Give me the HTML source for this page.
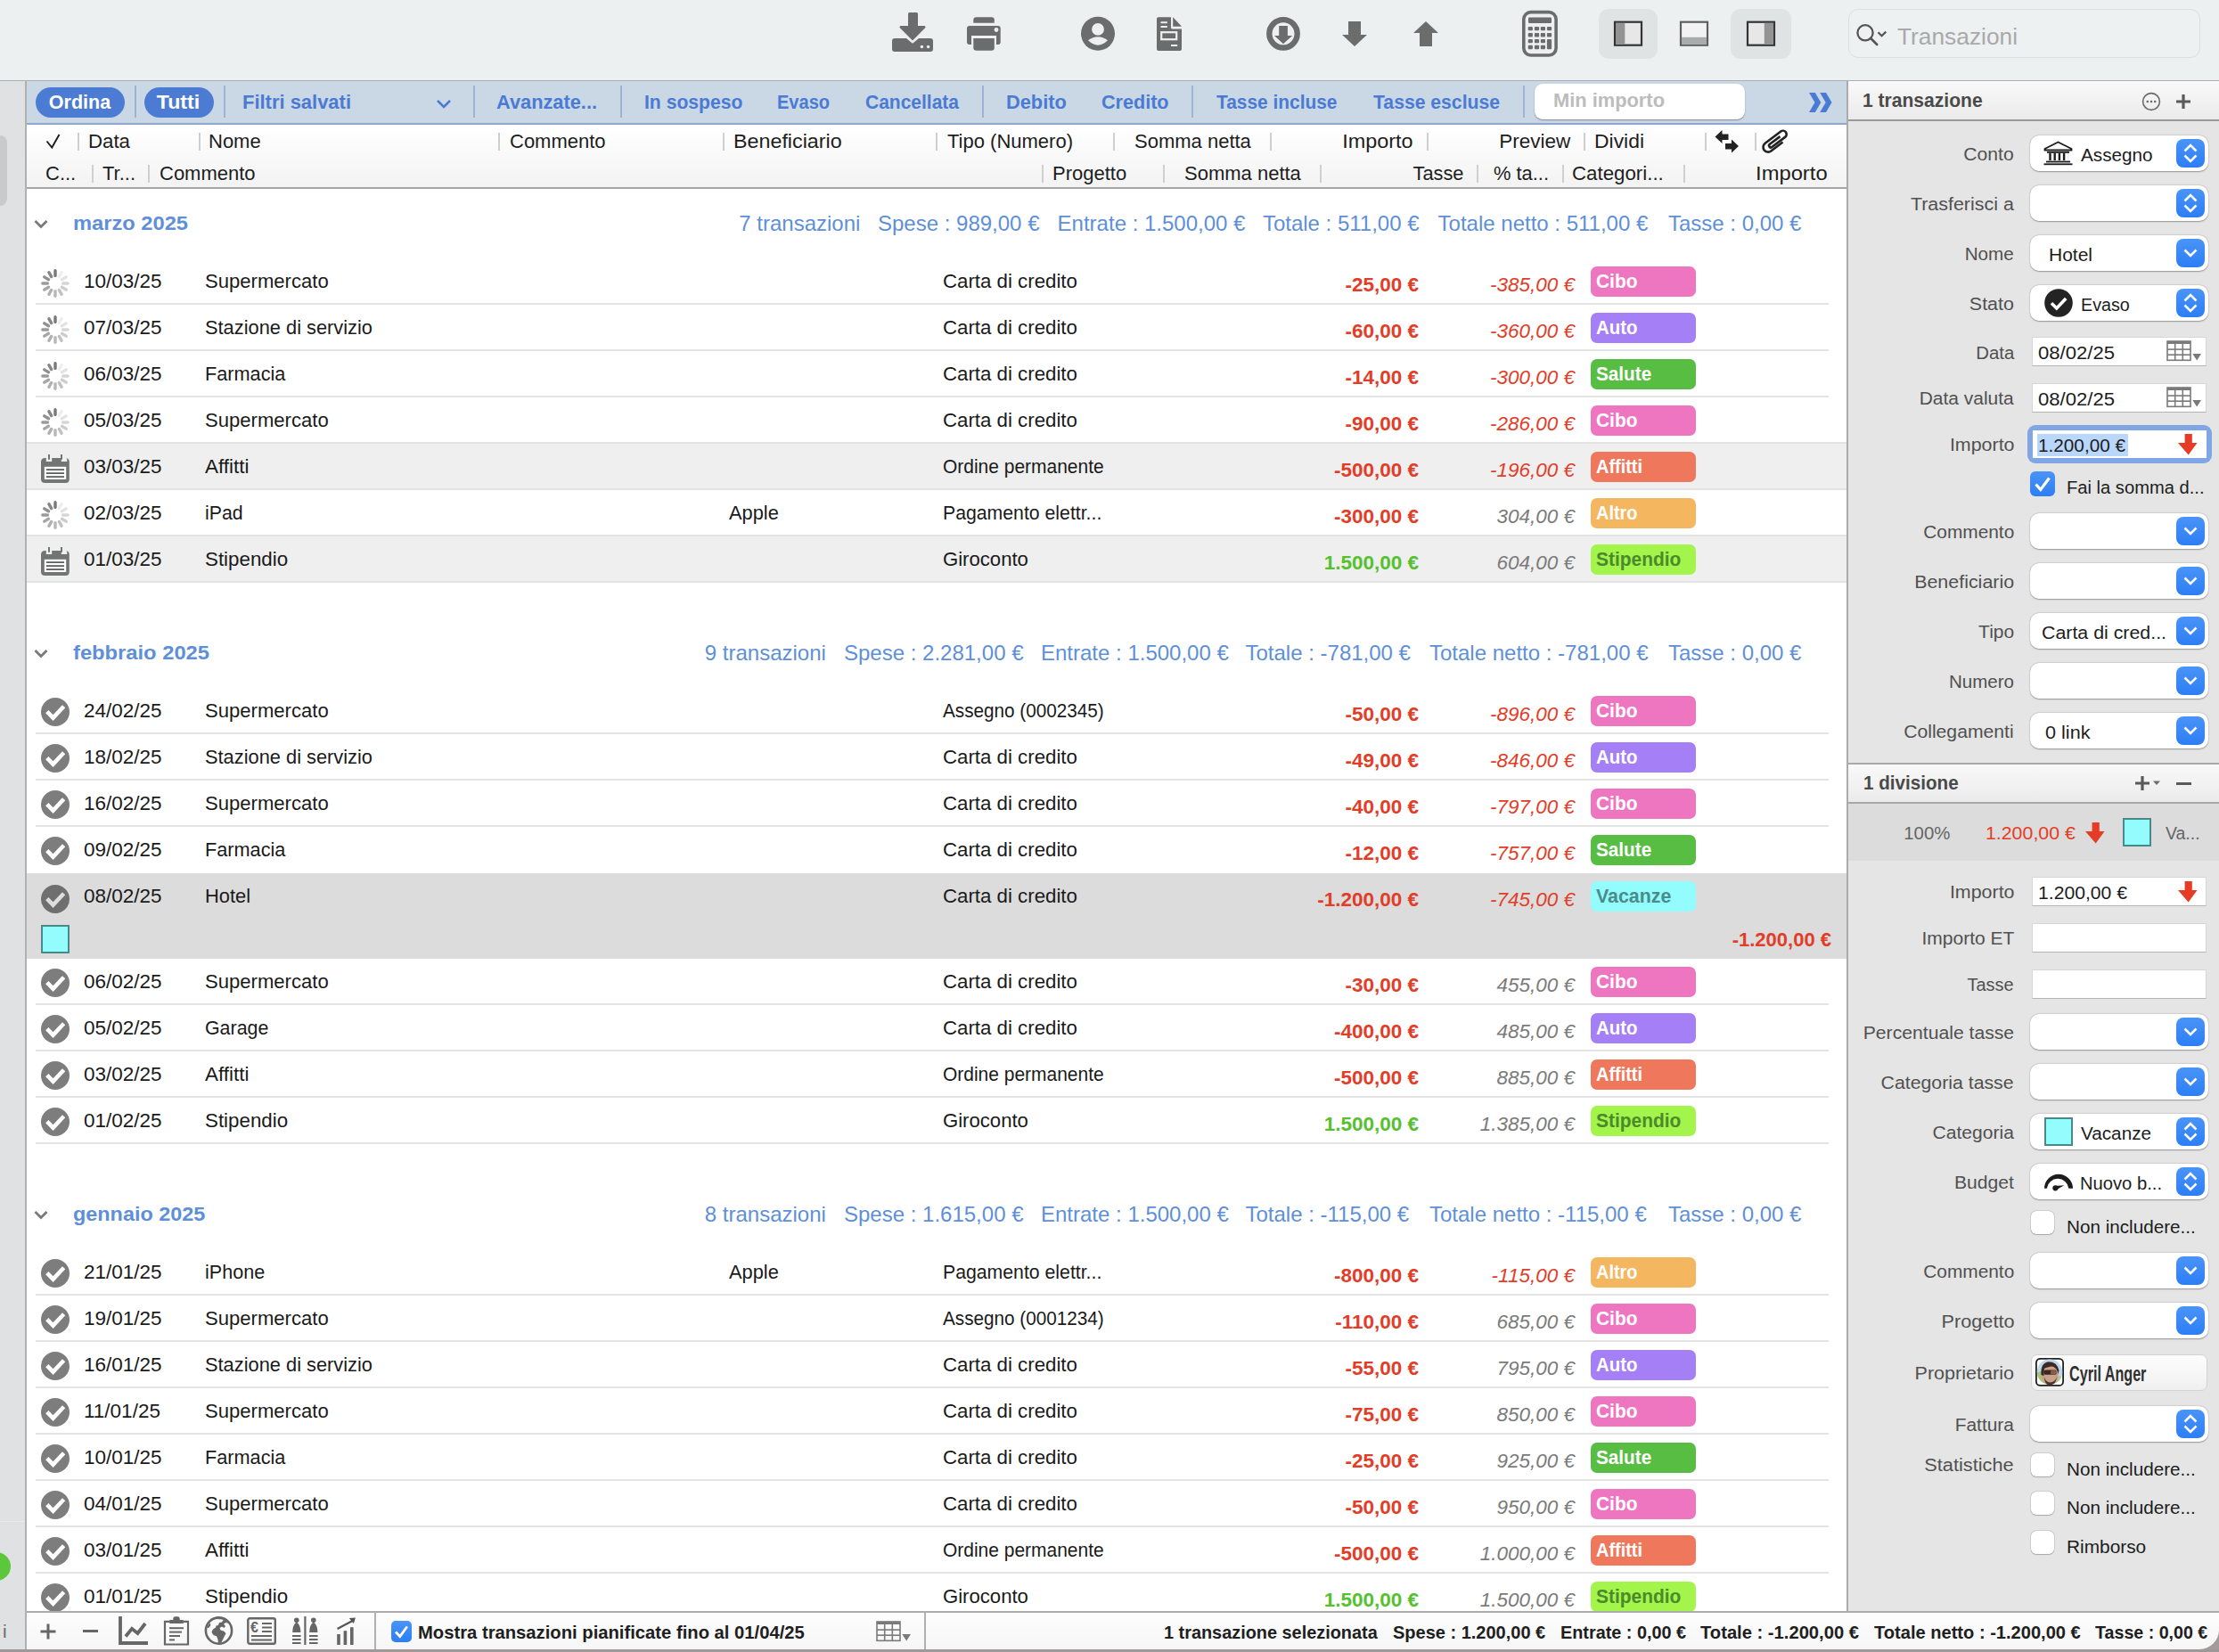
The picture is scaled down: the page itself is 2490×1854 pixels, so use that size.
<!DOCTYPE html>
<html><head><meta charset="utf-8"><title>Transazioni</title>
<style>
html,body{margin:0;padding:0;}
body{width:2490px;height:1854px;overflow:hidden;position:relative;background:#edf0f1;font-family:"Liberation Sans", sans-serif;}
.t{position:absolute;white-space:nowrap;}
svg{overflow:visible}
</style></head><body>

<div style="position:absolute;left:0px;top:0px;width:2490px;height:90px;background:#edf0f1;"></div>
<div style="position:absolute;left:0px;top:90px;width:2490px;height:1px;background:#a9aeb2;"></div>
<svg style="position:absolute;left:1000px;top:14px" width="48" height="46" viewBox="0 0 48 46">
<path fill="#6b6d6d" d="M19 1.5 Q19 0 20.5 0 L28.5 0 Q30 0 30 1.5 L30 15 L37 15 Q39.5 15.5 38 17.5 L24 31.5 L10 17.5 Q8.5 15.5 11 15 L19 15 Z"/>
<path fill="#6b6d6d" d="M4 29 L17 29 L24 34.8 L31 29 L44 29 Q47 29 47 32 L47 41 Q47 44 44 44 L4 44 Q1 44 1 41 L1 32 Q1 29 4 29 Z"/>
<circle cx="34.4" cy="38.5" r="1.7" fill="#edf0f1"/><circle cx="41.6" cy="38.5" r="1.7" fill="#edf0f1"/>
</svg>
<svg style="position:absolute;left:1084px;top:18px" width="40" height="40" viewBox="0 0 40 40">
<path fill="#6b6d6d" d="M8.3 4.5 Q8.3 1.2 11.5 1.2 L28.7 1.2 Q31.8 1.2 31.8 4.5 L31.8 7.8 L8.3 7.8 Z"/>
<path fill="#6b6d6d" d="M4 11 L36 11 Q38.7 11 38.7 14 L38.7 29 Q38.7 32 36 32 L34 32 L34 22 L6 22 L6 32 L4 32 Q1 32 1 29 L1 14 Q1 11 4 11 Z"/>
<circle cx="34" cy="15.5" r="2.4" fill="#edf0f1"/>
<path fill="#6b6d6d" d="M8.3 25 L31.8 25 L31.8 35.5 Q31.8 38.7 28.7 38.7 L11.5 38.7 Q8.3 38.7 8.3 35.5 Z"/>
</svg>
<svg style="position:absolute;left:1212px;top:18px" width="40" height="40" viewBox="0 0 40 40">
<circle cx="20" cy="19.8" r="19" fill="#6b6d6d"/>
<circle cx="20" cy="14.9" r="6.9" fill="#edf0f1"/>
<path fill="#edf0f1" d="M9 27.3 Q20 19 31 27.3 Q20 38 9 27.3 Z"/>
</svg>
<svg style="position:absolute;left:1297px;top:18px" width="32" height="40" viewBox="0 0 32 40">
<path fill="#6b6d6d" d="M1 3 Q1 1.2 3 1.2 L17 1.2 L17 13 Q17 14.5 18.5 14.5 L29 14.5 L29 37 Q29 39 27 39 L3 39 Q1 39 1 37 Z"/>
<path fill="#6b6d6d" d="M19.2 1.2 L29 11.8 L19.2 11.8 Z"/>
<rect x="5.5" y="6.2" width="7.3" height="2" fill="#edf0f1"/>
<rect x="5.5" y="11" width="7.3" height="2" fill="#edf0f1"/>
<rect x="6.2" y="18.2" width="17" height="8" fill="none" stroke="#edf0f1" stroke-width="2.2"/>
<rect x="17" y="32" width="7.2" height="2" fill="#edf0f1"/>
</svg>
<svg style="position:absolute;left:1420px;top:18px" width="40" height="40" viewBox="0 0 40 40">
<circle cx="20" cy="19.8" r="15.7" fill="none" stroke="#6b6d6d" stroke-width="6.4"/>
<path fill="#6b6d6d" d="M15.2 11 L24.9 11 L24.9 22 L30.2 22 L20 31.2 L10 22 L15.2 22 Z"/>
</svg>
<svg style="position:absolute;left:1505px;top:23px" width="30" height="30" viewBox="0 0 30 30"><path fill="#6b6d6d" d="M8 1 L22 1 L22 16 L29 16 L15 29 L1 16 L8 16 Z"/></svg>
<svg style="position:absolute;left:1585px;top:23px" width="30" height="30" viewBox="0 0 30 30"><path fill="#6b6d6d" d="M15 1 L29 14 L22 14 L22 29 L8 29 L8 14 L1 14 Z"/></svg>
<svg style="position:absolute;left:1706px;top:10px" width="44" height="56" viewBox="0 0 44 56">
<rect x="3.8" y="3.6" width="36.3" height="48.4" rx="8" fill="none" stroke="#6b6d6d" stroke-width="3.6"/>
<rect x="9" y="9.4" width="26" height="6.5" rx="1.2" fill="#6b6d6d"/>
<rect x="8.700000000000001" y="19.900000000000002" width="5.2" height="4.4" rx="1" fill="#6b6d6d"/><rect x="8.700000000000001" y="27.0" width="5.2" height="4.4" rx="1" fill="#6b6d6d"/><rect x="8.700000000000001" y="33.9" width="5.2" height="4.4" rx="1" fill="#6b6d6d"/><rect x="8.700000000000001" y="40.8" width="5.2" height="4.4" rx="1" fill="#6b6d6d"/><rect x="15.9" y="19.900000000000002" width="5.2" height="4.4" rx="1" fill="#6b6d6d"/><rect x="15.9" y="27.0" width="5.2" height="4.4" rx="1" fill="#6b6d6d"/><rect x="15.9" y="33.9" width="5.2" height="4.4" rx="1" fill="#6b6d6d"/><rect x="15.9" y="40.8" width="5.2" height="4.4" rx="1" fill="#6b6d6d"/><rect x="22.799999999999997" y="19.900000000000002" width="5.2" height="4.4" rx="1" fill="#6b6d6d"/><rect x="22.799999999999997" y="27.0" width="5.2" height="4.4" rx="1" fill="#6b6d6d"/><rect x="22.799999999999997" y="33.9" width="5.2" height="4.4" rx="1" fill="#6b6d6d"/><rect x="22.799999999999997" y="40.8" width="5.2" height="4.4" rx="1" fill="#6b6d6d"/><rect x="29.9" y="19.900000000000002" width="5.2" height="4.4" rx="1" fill="#6b6d6d"/><rect x="29.9" y="27.0" width="5.2" height="4.4" rx="1" fill="#6b6d6d"/><rect x="29.9" y="33.9" width="5.2" height="11.3" rx="1" fill="#6b6d6d"/></svg>
<div style="position:absolute;left:1794px;top:10px;width:66px;height:56px;background:#e0e3e4;border-radius:11px;"></div>
<div style="position:absolute;left:1942px;top:10px;width:68px;height:56px;background:#e0e3e4;border-radius:11px;"></div>
<svg style="position:absolute;left:1810px;top:23px" width="34" height="30" viewBox="0 0 34 30">
<rect x="2" y="1.7" width="30" height="26" fill="#e7e7e7" stroke="#333" stroke-width="2.2"/>
<rect x="3" y="2.8" width="10.3" height="23.8" fill="#939393"/>
</svg>
<svg style="position:absolute;left:1884px;top:23px" width="34" height="30" viewBox="0 0 34 30">
<rect x="2" y="1.7" width="30" height="26" fill="#f2f2f2" stroke="#5e6060" stroke-width="2.2"/>
<rect x="3" y="18.8" width="28" height="7.8" fill="#a9acac"/>
</svg>
<svg style="position:absolute;left:1959px;top:23px" width="34" height="30" viewBox="0 0 34 30">
<rect x="2" y="1.7" width="30" height="26" fill="#e7e7e7" stroke="#333" stroke-width="2.2"/>
<rect x="20.8" y="2.8" width="10.3" height="23.8" fill="#939393"/>
</svg>
<div style="position:absolute;left:2074px;top:10px;width:395px;height:55px;box-sizing:border-box;border:1.5px solid #dcdfe0;border-radius:11px;background:#eef1f2;"></div>
<svg style="position:absolute;left:2080px;top:24px" width="42" height="30" viewBox="0 0 42 30">
<circle cx="13" cy="12.8" r="8.6" fill="none" stroke="#555" stroke-width="2.3"/>
<line x1="19.2" y1="19" x2="26.2" y2="26" stroke="#555" stroke-width="2.6" stroke-linecap="round"/>
<path d="M27.5 12.2 L31.5 16.2 L36.3 11.6" fill="none" stroke="#555" stroke-width="2.2"/>
</svg>
<div class="t" style="left:2129.4px;top:23.5px;font-size:26px;line-height:34px;color:#a9a9a9;font-weight:normal;font-style:normal;"><span id="fit1" style="display:inline-block;transform:scaleX(1.0117);transform-origin:left center;">Transazioni</span></div>
<div style="position:absolute;left:0px;top:91px;width:28px;height:1717px;background:#dfe1e2;"></div>
<div style="position:absolute;left:0px;top:152px;width:8px;height:79px;background:#c9cacc;border-radius:0 8px 8px 0;"></div>
<div style="position:absolute;left:0px;top:1707px;width:28px;height:1px;background:#e8eaeb;"></div>
<div style="position:absolute;left:-20px;top:1742px;width:32px;height:32px;border-radius:50%;background:#5ac83a;"></div>
<div style="position:absolute;left:28px;top:91px;width:2px;height:1717px;background:#b0b0b0;"></div>
<div style="position:absolute;left:30px;top:91px;width:2042px;height:47px;background:#cad7e5;"></div>
<div style="position:absolute;left:30px;top:138px;width:2042px;height:2px;background:#8ea7cc;"></div>
<div style="position:absolute;left:40px;top:98px;width:100px;height:34px;border-radius:17px;background:#4c7bd3;"></div>
<div style="position:absolute;left:162px;top:98px;width:78px;height:34px;border-radius:17px;background:#4c7bd3;"></div>
<div class="t" style="left:-310.7px;width:800px;text-align:center;top:99.5px;font-size:22px;line-height:30px;color:#fff;font-weight:bold;font-style:normal;"><span id="fit2" style="display:inline-block;transform:scaleX(0.9788);transform-origin:center center;">Ordina</span></div>
<div class="t" style="left:-199.9px;width:800px;text-align:center;top:99.5px;font-size:22px;line-height:30px;color:#fff;font-weight:bold;font-style:normal;"><span id="fit3" style="display:inline-block;transform:scaleX(1.0518);transform-origin:center center;">Tutti</span></div>
<div style="position:absolute;left:151px;top:96px;width:2px;height:36px;background:#9db3d3;"></div>
<div style="position:absolute;left:251px;top:96px;width:2px;height:36px;background:#9db3d3;"></div>
<div style="position:absolute;left:531px;top:96px;width:2px;height:36px;background:#9db3d3;"></div>
<div style="position:absolute;left:696px;top:96px;width:2px;height:36px;background:#9db3d3;"></div>
<div style="position:absolute;left:1102px;top:96px;width:2px;height:36px;background:#9db3d3;"></div>
<div style="position:absolute;left:1337px;top:96px;width:2px;height:36px;background:#9db3d3;"></div>
<div style="position:absolute;left:1709px;top:96px;width:2px;height:36px;background:#9db3d3;"></div>
<div class="t" style="left:272px;top:99.5px;font-size:22px;line-height:30px;color:#4a7bd4;font-weight:bold;font-style:normal;"><span id="fit4" style="display:inline-block;transform:scaleX(0.9977);transform-origin:left center;">Filtri salvati</span></div>
<svg style="position:absolute;left:489px;top:110px" width="18" height="14" viewBox="0 0 18 14"><path d="M2 3 L9 10 L16 3" fill="none" stroke="#4a7bd4" stroke-width="2.6"/></svg>
<div class="t" style="left:557px;top:99.5px;font-size:22px;line-height:30px;color:#4a7bd4;font-weight:bold;font-style:normal;"><span id="fit5" style="display:inline-block;transform:scaleX(0.9901);transform-origin:left center;">Avanzate...</span></div>
<div class="t" style="left:722.6px;top:99.5px;font-size:22px;line-height:30px;color:#4a7bd4;font-weight:bold;font-style:normal;"><span id="fit6" style="display:inline-block;transform:scaleX(0.9607);transform-origin:left center;">In sospeso</span></div>
<div class="t" style="left:872px;top:99.5px;font-size:22px;line-height:30px;color:#4a7bd4;font-weight:bold;font-style:normal;"><span id="fit7" style="display:inline-block;transform:scaleX(0.9101);transform-origin:left center;">Evaso</span></div>
<div class="t" style="left:971px;top:99.5px;font-size:22px;line-height:30px;color:#4a7bd4;font-weight:bold;font-style:normal;"><span id="fit8" style="display:inline-block;transform:scaleX(0.9540);transform-origin:left center;">Cancellata</span></div>
<div class="t" style="left:1128.6px;top:99.5px;font-size:22px;line-height:30px;color:#4a7bd4;font-weight:bold;font-style:normal;"><span id="fit9" style="display:inline-block;transform:scaleX(0.9905);transform-origin:left center;">Debito</span></div>
<div class="t" style="left:1236px;top:99.5px;font-size:22px;line-height:30px;color:#4a7bd4;font-weight:bold;font-style:normal;"><span id="fit10" style="display:inline-block;transform:scaleX(0.9805);transform-origin:left center;">Credito</span></div>
<div class="t" style="left:1365px;top:99.5px;font-size:22px;line-height:30px;color:#4a7bd4;font-weight:bold;font-style:normal;"><span id="fit11" style="display:inline-block;transform:scaleX(0.9497);transform-origin:left center;">Tasse incluse</span></div>
<div class="t" style="left:1541px;top:99.5px;font-size:22px;line-height:30px;color:#4a7bd4;font-weight:bold;font-style:normal;"><span id="fit12" style="display:inline-block;transform:scaleX(0.9621);transform-origin:left center;">Tasse escluse</span></div>
<div style="position:absolute;left:1722px;top:94px;width:236px;height:40px;border-radius:9px;background:#fff;box-shadow:0 1px 1.5px rgba(0,0,0,0.35);"></div>
<div class="t" style="left:1743px;top:98.0px;font-size:22px;line-height:30px;color:#bcbcbc;font-weight:bold;font-style:normal;"><span id="fit13" style="display:inline-block;transform:scaleX(0.9930);transform-origin:left center;">Min importo</span></div>
<svg style="position:absolute;left:2030px;top:104px" width="28" height="23" viewBox="0 0 28 23"><path d="M0 0 L6.8 0 L13.3 11 L6.8 22 L0 22 L6.5 11 Z M12.2 0 L19 0 L25.5 11 L19 22 L12.2 22 L18.7 11 Z" fill="#4a7bd4"/></svg>
<div style="position:absolute;left:30px;top:140px;width:2042px;height:70px;background:linear-gradient(#ffffff,#f3f3f3);"></div>
<div style="position:absolute;left:30px;top:210px;width:2042px;height:2px;background:#a6a6a6;"></div>
<svg style="position:absolute;left:50px;top:149px" width="20" height="20" viewBox="0 0 20 20"><path d="M2.5 9.5 L8.3 16.5 L16.5 2" fill="none" stroke="#1d1d1d" stroke-width="1.9"/></svg>
<div style="position:absolute;left:87px;top:148.8px;width:2px;height:20px;background:#cfcfcf;"></div>
<div style="position:absolute;left:223px;top:148.8px;width:2px;height:20px;background:#cfcfcf;"></div>
<div style="position:absolute;left:559px;top:148.8px;width:2px;height:20px;background:#cfcfcf;"></div>
<div style="position:absolute;left:811px;top:148.8px;width:2px;height:20px;background:#cfcfcf;"></div>
<div style="position:absolute;left:1050px;top:148.8px;width:2px;height:20px;background:#cfcfcf;"></div>
<div style="position:absolute;left:1249px;top:148.8px;width:2px;height:20px;background:#cfcfcf;"></div>
<div style="position:absolute;left:1425px;top:148.8px;width:2px;height:20px;background:#cfcfcf;"></div>
<div style="position:absolute;left:1601px;top:148.8px;width:2px;height:20px;background:#cfcfcf;"></div>
<div style="position:absolute;left:1777px;top:148.8px;width:2px;height:20px;background:#cfcfcf;"></div>
<div style="position:absolute;left:1913px;top:148.8px;width:2px;height:20px;background:#cfcfcf;"></div>
<div style="position:absolute;left:1969px;top:148.8px;width:2px;height:20px;background:#cfcfcf;"></div>
<div style="position:absolute;left:103px;top:184.5px;width:2px;height:20px;background:#cfcfcf;"></div>
<div style="position:absolute;left:166px;top:184.5px;width:2px;height:20px;background:#cfcfcf;"></div>
<div style="position:absolute;left:1169px;top:184.5px;width:2px;height:20px;background:#cfcfcf;"></div>
<div style="position:absolute;left:1305px;top:184.5px;width:2px;height:20px;background:#cfcfcf;"></div>
<div style="position:absolute;left:1481px;top:184.5px;width:2px;height:20px;background:#cfcfcf;"></div>
<div style="position:absolute;left:1657px;top:184.5px;width:2px;height:20px;background:#cfcfcf;"></div>
<div style="position:absolute;left:1753px;top:184.5px;width:2px;height:20px;background:#cfcfcf;"></div>
<div style="position:absolute;left:1889px;top:184.5px;width:2px;height:20px;background:#cfcfcf;"></div>
<div class="t" style="left:99px;top:143.8px;font-size:22px;line-height:30px;color:#1d1d1d;font-weight:normal;font-style:normal;"><span id="fit14" style="display:inline-block;transform:scaleX(1.0111);transform-origin:left center;">Data</span></div>
<div class="t" style="left:234px;top:143.8px;font-size:22px;line-height:30px;color:#1d1d1d;font-weight:normal;font-style:normal;">Nome</div>
<div class="t" style="left:572px;top:143.8px;font-size:22px;line-height:30px;color:#1d1d1d;font-weight:normal;font-style:normal;">Commento</div>
<div class="t" style="left:822.6px;top:143.8px;font-size:22px;line-height:30px;color:#1d1d1d;font-weight:normal;font-style:normal;"><span id="fit15" style="display:inline-block;transform:scaleX(1.0587);transform-origin:left center;">Beneficiario</span></div>
<div class="t" style="left:1063px;top:143.8px;font-size:22px;line-height:30px;color:#1d1d1d;font-weight:normal;font-style:normal;">Tipo (Numero)</div>
<div class="t" style="left:1273px;top:143.8px;font-size:22px;line-height:30px;color:#1d1d1d;font-weight:normal;font-style:normal;">Somma netta</div>
<div class="t" style="left:786px;width:800px;text-align:right;top:143.8px;font-size:22px;line-height:30px;color:#1d1d1d;font-weight:normal;font-style:normal;"><span id="fit16" style="display:inline-block;transform:scaleX(1.0631);transform-origin:right center;">Importo</span></div>
<div class="t" style="left:962px;width:800px;text-align:right;top:143.8px;font-size:22px;line-height:30px;color:#1d1d1d;font-weight:normal;font-style:normal;"><span id="fit17" style="display:inline-block;transform:scaleX(1.0224);transform-origin:right center;">Preview</span></div>
<div class="t" style="left:1789px;top:143.8px;font-size:22px;line-height:30px;color:#1d1d1d;font-weight:normal;font-style:normal;"><span id="fit18" style="display:inline-block;transform:scaleX(1.0410);transform-origin:left center;">Dividi</span></div>
<svg style="position:absolute;left:1924px;top:146px" width="28" height="26" viewBox="0 0 28 26"><path fill="#222" d="M0.5 7.5 L8.5 0 L8.5 4.5 L15.5 4.5 L15.5 11 L8.5 11 L8.5 15 Z M27 18 L19 10.5 L19 15 L12 15 L12 21.5 L19 21.5 L19 25.5 Z"/></svg>
<svg style="position:absolute;left:1975px;top:140px" width="36" height="36" viewBox="0 0 36 36"><g transform="translate(17.8,18.5) rotate(-37) translate(-16.5,0)"><path d="M22 5.5 L5.5 5.5 A5.5 5.5 0 0 1 5.5 -5.5 L27.5 -5.5 A4 4 0 0 1 27.5 2.5 L9 2.5 A2 2 0 0 1 9 -1.5 L23.5 -1.5" fill="none" stroke="#222" stroke-width="2.6"/></g></svg>
<div class="t" style="left:51px;top:179.5px;font-size:22px;line-height:30px;color:#1d1d1d;font-weight:normal;font-style:normal;">C...</div>
<div class="t" style="left:115px;top:179.5px;font-size:22px;line-height:30px;color:#1d1d1d;font-weight:normal;font-style:normal;">Tr...</div>
<div class="t" style="left:179px;top:179.5px;font-size:22px;line-height:30px;color:#1d1d1d;font-weight:normal;font-style:normal;">Commento</div>
<div class="t" style="left:1181px;top:179.5px;font-size:22px;line-height:30px;color:#1d1d1d;font-weight:normal;font-style:normal;">Progetto</div>
<div class="t" style="left:1329px;top:179.5px;font-size:22px;line-height:30px;color:#1d1d1d;font-weight:normal;font-style:normal;">Somma netta</div>
<div class="t" style="left:842px;width:800px;text-align:right;top:179.5px;font-size:22px;line-height:30px;color:#1d1d1d;font-weight:normal;font-style:normal;"><span id="fit19" style="display:inline-block;transform:scaleX(0.9916);transform-origin:right center;">Tasse</span></div>
<div class="t" style="left:1676px;top:179.5px;font-size:22px;line-height:30px;color:#1d1d1d;font-weight:normal;font-style:normal;"><span id="fit20" style="display:inline-block;transform:scaleX(0.9942);transform-origin:left center;">% ta...</span></div>
<div class="t" style="left:1764px;top:179.5px;font-size:22px;line-height:30px;color:#1d1d1d;font-weight:normal;font-style:normal;"><span id="fit21" style="display:inline-block;transform:scaleX(1.0128);transform-origin:left center;">Categori...</span></div>
<div class="t" style="left:1250.5px;width:800px;text-align:right;top:179.5px;font-size:22px;line-height:30px;color:#1d1d1d;font-weight:normal;font-style:normal;"><span id="fit22" style="display:inline-block;transform:scaleX(1.0792);transform-origin:right center;">Importo</span></div>
<div style="position:absolute;left:30px;top:212px;width:2042px;height:1596px;background:#ffffff;"></div>
<svg style="position:absolute;left:37px;top:245px" width="20" height="14" viewBox="0 0 20 14"><path d="M2.5 3 L9 9.5 L15.5 3" fill="none" stroke="#7a7a7a" stroke-width="2.8"/></svg>
<div class="t" style="left:82px;top:236.3px;font-size:22.5px;line-height:30px;color:#5e8fd8;font-weight:bold;font-style:normal;"><span id="fit23" style="display:inline-block;transform:scaleX(1.0524);transform-origin:left center;">marzo 2025</span></div>
<div class="t" style="left:829.3px;top:236.0px;font-size:24px;line-height:30px;color:#5e8fd8;font-weight:normal;font-style:normal;">7 transazioni</div>
<div class="t" style="left:985px;top:236.0px;font-size:24px;line-height:30px;color:#5e8fd8;font-weight:normal;font-style:normal;">Spese : 989,00 &euro;</div>
<div class="t" style="left:1186.6px;top:236.0px;font-size:24px;line-height:30px;color:#5e8fd8;font-weight:normal;font-style:normal;">Entrate : 1.500,00 &euro;</div>
<div class="t" style="left:1416.9px;top:236.0px;font-size:24px;line-height:30px;color:#5e8fd8;font-weight:normal;font-style:normal;">Totale : 511,00 &euro;</div>
<div class="t" style="left:1613.6px;top:236.0px;font-size:24px;line-height:30px;color:#5e8fd8;font-weight:normal;font-style:normal;">Totale netto : 511,00 &euro;</div>
<div class="t" style="left:1872px;top:236.0px;font-size:24px;line-height:30px;color:#5e8fd8;font-weight:normal;font-style:normal;">Tasse : 0,00 &euro;</div>
<div style="position:absolute;left:40px;top:340px;width:2012px;height:2px;background:#e3e3e3;"></div>
<svg style="position:absolute;left:0px;top:0px" width="1" height="1" viewBox="0 0 1 1"><line x1="62.00" y1="309.40" x2="62.00" y2="303.80" stroke="#787878" stroke-width="3.4" stroke-linecap="round"/><line x1="66.30" y1="310.55" x2="69.10" y2="305.70" stroke="#eeeeee" stroke-width="3.4" stroke-linecap="round"/><line x1="69.45" y1="313.70" x2="74.30" y2="310.90" stroke="#e2e2e2" stroke-width="3.4" stroke-linecap="round"/><line x1="70.60" y1="318.00" x2="76.20" y2="318.00" stroke="#d6d6d6" stroke-width="3.4" stroke-linecap="round"/><line x1="69.45" y1="322.30" x2="74.30" y2="325.10" stroke="#cccccc" stroke-width="3.4" stroke-linecap="round"/><line x1="66.30" y1="325.45" x2="69.10" y2="330.30" stroke="#c2c2c2" stroke-width="3.4" stroke-linecap="round"/><line x1="62.00" y1="326.60" x2="62.00" y2="332.20" stroke="#b8b8b8" stroke-width="3.4" stroke-linecap="round"/><line x1="57.70" y1="325.45" x2="54.90" y2="330.30" stroke="#b0b0b0" stroke-width="3.4" stroke-linecap="round"/><line x1="54.55" y1="322.30" x2="49.70" y2="325.10" stroke="#a6a6a6" stroke-width="3.4" stroke-linecap="round"/><line x1="53.40" y1="318.00" x2="47.80" y2="318.00" stroke="#9a9a9a" stroke-width="3.4" stroke-linecap="round"/><line x1="54.55" y1="313.70" x2="49.70" y2="310.90" stroke="#909090" stroke-width="3.4" stroke-linecap="round"/><line x1="57.70" y1="310.55" x2="54.90" y2="305.70" stroke="#868686" stroke-width="3.4" stroke-linecap="round"/></svg>
<div class="t" style="left:94px;top:301.2px;font-size:22.5px;line-height:30px;color:#1a1a1a;font-weight:normal;font-style:normal;">10/03/25</div>
<div class="t" style="left:230px;top:301.2px;font-size:22.5px;line-height:30px;color:#1a1a1a;font-weight:normal;font-style:normal;"><span id="fit24" style="display:inline-block;transform:scaleX(0.9814);transform-origin:left center;">Supermercato</span></div>
<div class="t" style="left:1058px;top:301.2px;font-size:22.5px;line-height:30px;color:#1a1a1a;font-weight:normal;font-style:normal;"><span id="fit25" style="display:inline-block;transform:scaleX(0.9890);transform-origin:left center;">Carta di credito</span></div>
<div class="t" style="left:792px;width:800px;text-align:right;top:305.2px;font-size:22.5px;line-height:30px;color:#e23d28;font-weight:bold;font-style:normal;">-25,00 &euro;</div>
<div class="t" style="left:967px;width:800px;text-align:right;top:305.2px;font-size:22.5px;line-height:30px;color:#e23d28;font-weight:normal;font-style:italic;">-385,00 &euro;</div>
<div style="position:absolute;left:1785px;top:299px;width:118px;height:34px;border-radius:7px;background:#ee76c0;"></div>
<div class="t" style="left:1790.5px;top:301.0px;font-size:22px;line-height:30px;color:#ffffff;font-weight:bold;font-style:normal;"><span id="fit26" style="display:inline-block;transform:scaleX(0.9511);transform-origin:left center;">Cibo</span></div>
<div style="position:absolute;left:40px;top:392px;width:2012px;height:2px;background:#e3e3e3;"></div>
<svg style="position:absolute;left:0px;top:0px" width="1" height="1" viewBox="0 0 1 1"><line x1="62.00" y1="361.40" x2="62.00" y2="355.80" stroke="#787878" stroke-width="3.4" stroke-linecap="round"/><line x1="66.30" y1="362.55" x2="69.10" y2="357.70" stroke="#eeeeee" stroke-width="3.4" stroke-linecap="round"/><line x1="69.45" y1="365.70" x2="74.30" y2="362.90" stroke="#e2e2e2" stroke-width="3.4" stroke-linecap="round"/><line x1="70.60" y1="370.00" x2="76.20" y2="370.00" stroke="#d6d6d6" stroke-width="3.4" stroke-linecap="round"/><line x1="69.45" y1="374.30" x2="74.30" y2="377.10" stroke="#cccccc" stroke-width="3.4" stroke-linecap="round"/><line x1="66.30" y1="377.45" x2="69.10" y2="382.30" stroke="#c2c2c2" stroke-width="3.4" stroke-linecap="round"/><line x1="62.00" y1="378.60" x2="62.00" y2="384.20" stroke="#b8b8b8" stroke-width="3.4" stroke-linecap="round"/><line x1="57.70" y1="377.45" x2="54.90" y2="382.30" stroke="#b0b0b0" stroke-width="3.4" stroke-linecap="round"/><line x1="54.55" y1="374.30" x2="49.70" y2="377.10" stroke="#a6a6a6" stroke-width="3.4" stroke-linecap="round"/><line x1="53.40" y1="370.00" x2="47.80" y2="370.00" stroke="#9a9a9a" stroke-width="3.4" stroke-linecap="round"/><line x1="54.55" y1="365.70" x2="49.70" y2="362.90" stroke="#909090" stroke-width="3.4" stroke-linecap="round"/><line x1="57.70" y1="362.55" x2="54.90" y2="357.70" stroke="#868686" stroke-width="3.4" stroke-linecap="round"/></svg>
<div class="t" style="left:94px;top:353.2px;font-size:22.5px;line-height:30px;color:#1a1a1a;font-weight:normal;font-style:normal;">07/03/25</div>
<div class="t" style="left:230px;top:353.2px;font-size:22.5px;line-height:30px;color:#1a1a1a;font-weight:normal;font-style:normal;"><span id="fit27" style="display:inline-block;transform:scaleX(0.9699);transform-origin:left center;">Stazione di servizio</span></div>
<div class="t" style="left:1058px;top:353.2px;font-size:22.5px;line-height:30px;color:#1a1a1a;font-weight:normal;font-style:normal;"><span id="fit28" style="display:inline-block;transform:scaleX(0.9890);transform-origin:left center;">Carta di credito</span></div>
<div class="t" style="left:792px;width:800px;text-align:right;top:357.2px;font-size:22.5px;line-height:30px;color:#e23d28;font-weight:bold;font-style:normal;">-60,00 &euro;</div>
<div class="t" style="left:967px;width:800px;text-align:right;top:357.2px;font-size:22.5px;line-height:30px;color:#e23d28;font-weight:normal;font-style:italic;">-360,00 &euro;</div>
<div style="position:absolute;left:1785px;top:351px;width:118px;height:34px;border-radius:7px;background:#a47ff5;"></div>
<div class="t" style="left:1790.5px;top:353.0px;font-size:22px;line-height:30px;color:#ffffff;font-weight:bold;font-style:normal;"><span id="fit29" style="display:inline-block;transform:scaleX(0.9283);transform-origin:left center;">Auto</span></div>
<div style="position:absolute;left:40px;top:444px;width:2012px;height:2px;background:#e3e3e3;"></div>
<svg style="position:absolute;left:0px;top:0px" width="1" height="1" viewBox="0 0 1 1"><line x1="62.00" y1="413.40" x2="62.00" y2="407.80" stroke="#787878" stroke-width="3.4" stroke-linecap="round"/><line x1="66.30" y1="414.55" x2="69.10" y2="409.70" stroke="#eeeeee" stroke-width="3.4" stroke-linecap="round"/><line x1="69.45" y1="417.70" x2="74.30" y2="414.90" stroke="#e2e2e2" stroke-width="3.4" stroke-linecap="round"/><line x1="70.60" y1="422.00" x2="76.20" y2="422.00" stroke="#d6d6d6" stroke-width="3.4" stroke-linecap="round"/><line x1="69.45" y1="426.30" x2="74.30" y2="429.10" stroke="#cccccc" stroke-width="3.4" stroke-linecap="round"/><line x1="66.30" y1="429.45" x2="69.10" y2="434.30" stroke="#c2c2c2" stroke-width="3.4" stroke-linecap="round"/><line x1="62.00" y1="430.60" x2="62.00" y2="436.20" stroke="#b8b8b8" stroke-width="3.4" stroke-linecap="round"/><line x1="57.70" y1="429.45" x2="54.90" y2="434.30" stroke="#b0b0b0" stroke-width="3.4" stroke-linecap="round"/><line x1="54.55" y1="426.30" x2="49.70" y2="429.10" stroke="#a6a6a6" stroke-width="3.4" stroke-linecap="round"/><line x1="53.40" y1="422.00" x2="47.80" y2="422.00" stroke="#9a9a9a" stroke-width="3.4" stroke-linecap="round"/><line x1="54.55" y1="417.70" x2="49.70" y2="414.90" stroke="#909090" stroke-width="3.4" stroke-linecap="round"/><line x1="57.70" y1="414.55" x2="54.90" y2="409.70" stroke="#868686" stroke-width="3.4" stroke-linecap="round"/></svg>
<div class="t" style="left:94px;top:405.2px;font-size:22.5px;line-height:30px;color:#1a1a1a;font-weight:normal;font-style:normal;">06/03/25</div>
<div class="t" style="left:230px;top:405.2px;font-size:22.5px;line-height:30px;color:#1a1a1a;font-weight:normal;font-style:normal;"><span id="fit30" style="display:inline-block;transform:scaleX(0.9639);transform-origin:left center;">Farmacia</span></div>
<div class="t" style="left:1058px;top:405.2px;font-size:22.5px;line-height:30px;color:#1a1a1a;font-weight:normal;font-style:normal;"><span id="fit31" style="display:inline-block;transform:scaleX(0.9890);transform-origin:left center;">Carta di credito</span></div>
<div class="t" style="left:792px;width:800px;text-align:right;top:409.2px;font-size:22.5px;line-height:30px;color:#e23d28;font-weight:bold;font-style:normal;">-14,00 &euro;</div>
<div class="t" style="left:967px;width:800px;text-align:right;top:409.2px;font-size:22.5px;line-height:30px;color:#e23d28;font-weight:normal;font-style:italic;">-300,00 &euro;</div>
<div style="position:absolute;left:1785px;top:403px;width:118px;height:34px;border-radius:7px;background:#57bd43;"></div>
<div class="t" style="left:1790.5px;top:405.0px;font-size:22px;line-height:30px;color:#ffffff;font-weight:bold;font-style:normal;"><span id="fit32" style="display:inline-block;transform:scaleX(0.9420);transform-origin:left center;">Salute</span></div>
<div style="position:absolute;left:40px;top:496px;width:2012px;height:2px;background:#e3e3e3;"></div>
<svg style="position:absolute;left:0px;top:0px" width="1" height="1" viewBox="0 0 1 1"><line x1="62.00" y1="465.40" x2="62.00" y2="459.80" stroke="#787878" stroke-width="3.4" stroke-linecap="round"/><line x1="66.30" y1="466.55" x2="69.10" y2="461.70" stroke="#eeeeee" stroke-width="3.4" stroke-linecap="round"/><line x1="69.45" y1="469.70" x2="74.30" y2="466.90" stroke="#e2e2e2" stroke-width="3.4" stroke-linecap="round"/><line x1="70.60" y1="474.00" x2="76.20" y2="474.00" stroke="#d6d6d6" stroke-width="3.4" stroke-linecap="round"/><line x1="69.45" y1="478.30" x2="74.30" y2="481.10" stroke="#cccccc" stroke-width="3.4" stroke-linecap="round"/><line x1="66.30" y1="481.45" x2="69.10" y2="486.30" stroke="#c2c2c2" stroke-width="3.4" stroke-linecap="round"/><line x1="62.00" y1="482.60" x2="62.00" y2="488.20" stroke="#b8b8b8" stroke-width="3.4" stroke-linecap="round"/><line x1="57.70" y1="481.45" x2="54.90" y2="486.30" stroke="#b0b0b0" stroke-width="3.4" stroke-linecap="round"/><line x1="54.55" y1="478.30" x2="49.70" y2="481.10" stroke="#a6a6a6" stroke-width="3.4" stroke-linecap="round"/><line x1="53.40" y1="474.00" x2="47.80" y2="474.00" stroke="#9a9a9a" stroke-width="3.4" stroke-linecap="round"/><line x1="54.55" y1="469.70" x2="49.70" y2="466.90" stroke="#909090" stroke-width="3.4" stroke-linecap="round"/><line x1="57.70" y1="466.55" x2="54.90" y2="461.70" stroke="#868686" stroke-width="3.4" stroke-linecap="round"/></svg>
<div class="t" style="left:94px;top:457.2px;font-size:22.5px;line-height:30px;color:#1a1a1a;font-weight:normal;font-style:normal;">05/03/25</div>
<div class="t" style="left:230px;top:457.2px;font-size:22.5px;line-height:30px;color:#1a1a1a;font-weight:normal;font-style:normal;"><span id="fit33" style="display:inline-block;transform:scaleX(0.9814);transform-origin:left center;">Supermercato</span></div>
<div class="t" style="left:1058px;top:457.2px;font-size:22.5px;line-height:30px;color:#1a1a1a;font-weight:normal;font-style:normal;"><span id="fit34" style="display:inline-block;transform:scaleX(0.9890);transform-origin:left center;">Carta di credito</span></div>
<div class="t" style="left:792px;width:800px;text-align:right;top:461.2px;font-size:22.5px;line-height:30px;color:#e23d28;font-weight:bold;font-style:normal;">-90,00 &euro;</div>
<div class="t" style="left:967px;width:800px;text-align:right;top:461.2px;font-size:22.5px;line-height:30px;color:#e23d28;font-weight:normal;font-style:italic;">-286,00 &euro;</div>
<div style="position:absolute;left:1785px;top:455px;width:118px;height:34px;border-radius:7px;background:#ee76c0;"></div>
<div class="t" style="left:1790.5px;top:457.0px;font-size:22px;line-height:30px;color:#ffffff;font-weight:bold;font-style:normal;"><span id="fit35" style="display:inline-block;transform:scaleX(0.9511);transform-origin:left center;">Cibo</span></div>
<div style="position:absolute;left:30px;top:496px;width:2042px;height:52px;background:#efefef;"></div>
<div style="position:absolute;left:30px;top:496px;width:2042px;height:2px;background:#e3e3e3;"></div>
<div style="position:absolute;left:30px;top:548px;width:2042px;height:2px;background:#e3e3e3;"></div>
<svg style="position:absolute;left:46px;top:510px" width="34" height="34" viewBox="0 0 34 34">
<path fill="#737575" d="M4.5 4 L5.8 4 L5.8 8 L12.2 8 L12.2 4 L22.8 4 L22.8 8 L29.2 8 L29.2 4 L27.5 4 Q31.8 4 31.8 8.5 L31.8 27.5 Q31.8 32 27.5 32 L4.5 32 Q0 32 0 27.5 L0 8.5 Q0 4 4.5 4 Z"/>
<rect x="8" y="0" width="2" height="5.7" fill="#737575"/><rect x="22" y="0" width="2" height="5.7" fill="#737575"/>
<rect x="3.8" y="13.8" width="24.4" height="14.2" fill="#ffffff"/>
<rect x="6" y="16.2" width="20" height="1.8" fill="#5f5f5f"/><rect x="6" y="20.2" width="20" height="1.8" fill="#5f5f5f"/><rect x="6" y="24.2" width="20" height="1.8" fill="#5f5f5f"/>
</svg>
<div class="t" style="left:94px;top:509.20000000000005px;font-size:22.5px;line-height:30px;color:#1a1a1a;font-weight:normal;font-style:normal;">03/03/25</div>
<div class="t" style="left:230px;top:509.20000000000005px;font-size:22.5px;line-height:30px;color:#1a1a1a;font-weight:normal;font-style:normal;"><span id="fit36" style="display:inline-block;transform:scaleX(0.9978);transform-origin:left center;">Affitti</span></div>
<div class="t" style="left:1058px;top:509.20000000000005px;font-size:22.5px;line-height:30px;color:#1a1a1a;font-weight:normal;font-style:normal;"><span id="fit37" style="display:inline-block;transform:scaleX(0.9320);transform-origin:left center;">Ordine permanente</span></div>
<div class="t" style="left:792px;width:800px;text-align:right;top:513.2px;font-size:22.5px;line-height:30px;color:#e23d28;font-weight:bold;font-style:normal;">-500,00 &euro;</div>
<div class="t" style="left:967px;width:800px;text-align:right;top:513.2px;font-size:22.5px;line-height:30px;color:#e23d28;font-weight:normal;font-style:italic;">-196,00 &euro;</div>
<div style="position:absolute;left:1785px;top:507px;width:118px;height:34px;border-radius:7px;background:#ef785c;"></div>
<div class="t" style="left:1790.5px;top:509.0px;font-size:22px;line-height:30px;color:#ffffff;font-weight:bold;font-style:normal;"><span id="fit38" style="display:inline-block;transform:scaleX(0.9056);transform-origin:left center;">Affitti</span></div>
<div style="position:absolute;left:40px;top:600px;width:2012px;height:2px;background:#e3e3e3;"></div>
<svg style="position:absolute;left:0px;top:0px" width="1" height="1" viewBox="0 0 1 1"><line x1="62.00" y1="569.40" x2="62.00" y2="563.80" stroke="#787878" stroke-width="3.4" stroke-linecap="round"/><line x1="66.30" y1="570.55" x2="69.10" y2="565.70" stroke="#eeeeee" stroke-width="3.4" stroke-linecap="round"/><line x1="69.45" y1="573.70" x2="74.30" y2="570.90" stroke="#e2e2e2" stroke-width="3.4" stroke-linecap="round"/><line x1="70.60" y1="578.00" x2="76.20" y2="578.00" stroke="#d6d6d6" stroke-width="3.4" stroke-linecap="round"/><line x1="69.45" y1="582.30" x2="74.30" y2="585.10" stroke="#cccccc" stroke-width="3.4" stroke-linecap="round"/><line x1="66.30" y1="585.45" x2="69.10" y2="590.30" stroke="#c2c2c2" stroke-width="3.4" stroke-linecap="round"/><line x1="62.00" y1="586.60" x2="62.00" y2="592.20" stroke="#b8b8b8" stroke-width="3.4" stroke-linecap="round"/><line x1="57.70" y1="585.45" x2="54.90" y2="590.30" stroke="#b0b0b0" stroke-width="3.4" stroke-linecap="round"/><line x1="54.55" y1="582.30" x2="49.70" y2="585.10" stroke="#a6a6a6" stroke-width="3.4" stroke-linecap="round"/><line x1="53.40" y1="578.00" x2="47.80" y2="578.00" stroke="#9a9a9a" stroke-width="3.4" stroke-linecap="round"/><line x1="54.55" y1="573.70" x2="49.70" y2="570.90" stroke="#909090" stroke-width="3.4" stroke-linecap="round"/><line x1="57.70" y1="570.55" x2="54.90" y2="565.70" stroke="#868686" stroke-width="3.4" stroke-linecap="round"/></svg>
<div class="t" style="left:94px;top:561.2px;font-size:22.5px;line-height:30px;color:#1a1a1a;font-weight:normal;font-style:normal;">02/03/25</div>
<div class="t" style="left:230px;top:561.2px;font-size:22.5px;line-height:30px;color:#1a1a1a;font-weight:normal;font-style:normal;"><span id="fit39" style="display:inline-block;transform:scaleX(0.9457);transform-origin:left center;">iPad</span></div>
<div class="t" style="left:818px;top:561.2px;font-size:22.5px;line-height:30px;color:#1a1a1a;font-weight:normal;font-style:normal;"><span id="fit40" style="display:inline-block;transform:scaleX(0.9696);transform-origin:left center;">Apple</span></div>
<div class="t" style="left:1058px;top:561.2px;font-size:22.5px;line-height:30px;color:#1a1a1a;font-weight:normal;font-style:normal;"><span id="fit41" style="display:inline-block;transform:scaleX(0.9440);transform-origin:left center;">Pagamento elettr...</span></div>
<div class="t" style="left:792px;width:800px;text-align:right;top:565.2px;font-size:22.5px;line-height:30px;color:#e23d28;font-weight:bold;font-style:normal;">-300,00 &euro;</div>
<div class="t" style="left:967px;width:800px;text-align:right;top:565.2px;font-size:22.5px;line-height:30px;color:#7b7b7b;font-weight:normal;font-style:italic;">304,00 &euro;</div>
<div style="position:absolute;left:1785px;top:559px;width:118px;height:34px;border-radius:7px;background:#f4b65f;"></div>
<div class="t" style="left:1790.5px;top:561.0px;font-size:22px;line-height:30px;color:#ffffff;font-weight:bold;font-style:normal;"><span id="fit42" style="display:inline-block;transform:scaleX(0.9059);transform-origin:left center;">Altro</span></div>
<div style="position:absolute;left:30px;top:600px;width:2042px;height:52px;background:#efefef;"></div>
<div style="position:absolute;left:30px;top:600px;width:2042px;height:2px;background:#e3e3e3;"></div>
<div style="position:absolute;left:30px;top:652px;width:2042px;height:2px;background:#e3e3e3;"></div>
<svg style="position:absolute;left:46px;top:614px" width="34" height="34" viewBox="0 0 34 34">
<path fill="#737575" d="M4.5 4 L5.8 4 L5.8 8 L12.2 8 L12.2 4 L22.8 4 L22.8 8 L29.2 8 L29.2 4 L27.5 4 Q31.8 4 31.8 8.5 L31.8 27.5 Q31.8 32 27.5 32 L4.5 32 Q0 32 0 27.5 L0 8.5 Q0 4 4.5 4 Z"/>
<rect x="8" y="0" width="2" height="5.7" fill="#737575"/><rect x="22" y="0" width="2" height="5.7" fill="#737575"/>
<rect x="3.8" y="13.8" width="24.4" height="14.2" fill="#ffffff"/>
<rect x="6" y="16.2" width="20" height="1.8" fill="#5f5f5f"/><rect x="6" y="20.2" width="20" height="1.8" fill="#5f5f5f"/><rect x="6" y="24.2" width="20" height="1.8" fill="#5f5f5f"/>
</svg>
<div class="t" style="left:94px;top:613.2px;font-size:22.5px;line-height:30px;color:#1a1a1a;font-weight:normal;font-style:normal;">01/03/25</div>
<div class="t" style="left:230px;top:613.2px;font-size:22.5px;line-height:30px;color:#1a1a1a;font-weight:normal;font-style:normal;"><span id="fit43" style="display:inline-block;transform:scaleX(0.9933);transform-origin:left center;">Stipendio</span></div>
<div class="t" style="left:1058px;top:613.2px;font-size:22.5px;line-height:30px;color:#1a1a1a;font-weight:normal;font-style:normal;"><span id="fit44" style="display:inline-block;transform:scaleX(0.9830);transform-origin:left center;">Giroconto</span></div>
<div class="t" style="left:792px;width:800px;text-align:right;top:617.2px;font-size:22.5px;line-height:30px;color:#56c12f;font-weight:bold;font-style:normal;">1.500,00 &euro;</div>
<div class="t" style="left:967px;width:800px;text-align:right;top:617.2px;font-size:22.5px;line-height:30px;color:#7b7b7b;font-weight:normal;font-style:italic;">604,00 &euro;</div>
<div style="position:absolute;left:1785px;top:611px;width:118px;height:34px;border-radius:7px;background:#a4f54b;"></div>
<div class="t" style="left:1790.5px;top:613.0px;font-size:22px;line-height:30px;color:#4a8a2a;font-weight:bold;font-style:normal;"><span id="fit45" style="display:inline-block;transform:scaleX(0.9509);transform-origin:left center;">Stipendio</span></div>
<svg style="position:absolute;left:37px;top:727px" width="20" height="14" viewBox="0 0 20 14"><path d="M2.5 3 L9 9.5 L15.5 3" fill="none" stroke="#7a7a7a" stroke-width="2.8"/></svg>
<div class="t" style="left:82px;top:718.3px;font-size:22.5px;line-height:30px;color:#5e8fd8;font-weight:bold;font-style:normal;"><span id="fit46" style="display:inline-block;transform:scaleX(1.0546);transform-origin:left center;">febbraio 2025</span></div>
<div class="t" style="left:790.8px;top:718.0px;font-size:24px;line-height:30px;color:#5e8fd8;font-weight:normal;font-style:normal;">9 transazioni</div>
<div class="t" style="left:947px;top:718.0px;font-size:24px;line-height:30px;color:#5e8fd8;font-weight:normal;font-style:normal;">Spese : 2.281,00 &euro;</div>
<div class="t" style="left:1168px;top:718.0px;font-size:24px;line-height:30px;color:#5e8fd8;font-weight:normal;font-style:normal;">Entrate : 1.500,00 &euro;</div>
<div class="t" style="left:1397.5px;top:718.0px;font-size:24px;line-height:30px;color:#5e8fd8;font-weight:normal;font-style:normal;">Totale : -781,00 &euro;</div>
<div class="t" style="left:1604px;top:718.0px;font-size:24px;line-height:30px;color:#5e8fd8;font-weight:normal;font-style:normal;">Totale netto : -781,00 &euro;</div>
<div class="t" style="left:1872px;top:718.0px;font-size:24px;line-height:30px;color:#5e8fd8;font-weight:normal;font-style:normal;">Tasse : 0,00 &euro;</div>
<div style="position:absolute;left:40px;top:822px;width:2012px;height:2px;background:#e3e3e3;"></div>
<svg style="position:absolute;left:46px;top:783px" width="32" height="32" viewBox="0 0 32 32"><circle cx="16" cy="16" r="16" fill="#7d7d7d"/><path d="M6.8 15.6 L13.6 22.6 L25.6 9.8" fill="none" stroke="#ffffff" stroke-width="4.6"/></svg>
<div class="t" style="left:94px;top:783.2px;font-size:22.5px;line-height:30px;color:#1a1a1a;font-weight:normal;font-style:normal;">24/02/25</div>
<div class="t" style="left:230px;top:783.2px;font-size:22.5px;line-height:30px;color:#1a1a1a;font-weight:normal;font-style:normal;"><span id="fit47" style="display:inline-block;transform:scaleX(0.9814);transform-origin:left center;">Supermercato</span></div>
<div class="t" style="left:1058px;top:783.2px;font-size:22.5px;line-height:30px;color:#1a1a1a;font-weight:normal;font-style:normal;"><span id="fit48" style="display:inline-block;transform:scaleX(0.9200);transform-origin:left center;">Assegno (0002345)</span></div>
<div class="t" style="left:792px;width:800px;text-align:right;top:787.2px;font-size:22.5px;line-height:30px;color:#e23d28;font-weight:bold;font-style:normal;">-50,00 &euro;</div>
<div class="t" style="left:967px;width:800px;text-align:right;top:787.2px;font-size:22.5px;line-height:30px;color:#e23d28;font-weight:normal;font-style:italic;">-896,00 &euro;</div>
<div style="position:absolute;left:1785px;top:781px;width:118px;height:34px;border-radius:7px;background:#ee76c0;"></div>
<div class="t" style="left:1790.5px;top:783.0px;font-size:22px;line-height:30px;color:#ffffff;font-weight:bold;font-style:normal;"><span id="fit49" style="display:inline-block;transform:scaleX(0.9511);transform-origin:left center;">Cibo</span></div>
<div style="position:absolute;left:40px;top:874px;width:2012px;height:2px;background:#e3e3e3;"></div>
<svg style="position:absolute;left:46px;top:835px" width="32" height="32" viewBox="0 0 32 32"><circle cx="16" cy="16" r="16" fill="#7d7d7d"/><path d="M6.8 15.6 L13.6 22.6 L25.6 9.8" fill="none" stroke="#ffffff" stroke-width="4.6"/></svg>
<div class="t" style="left:94px;top:835.2px;font-size:22.5px;line-height:30px;color:#1a1a1a;font-weight:normal;font-style:normal;">18/02/25</div>
<div class="t" style="left:230px;top:835.2px;font-size:22.5px;line-height:30px;color:#1a1a1a;font-weight:normal;font-style:normal;"><span id="fit50" style="display:inline-block;transform:scaleX(0.9699);transform-origin:left center;">Stazione di servizio</span></div>
<div class="t" style="left:1058px;top:835.2px;font-size:22.5px;line-height:30px;color:#1a1a1a;font-weight:normal;font-style:normal;"><span id="fit51" style="display:inline-block;transform:scaleX(0.9890);transform-origin:left center;">Carta di credito</span></div>
<div class="t" style="left:792px;width:800px;text-align:right;top:839.2px;font-size:22.5px;line-height:30px;color:#e23d28;font-weight:bold;font-style:normal;">-49,00 &euro;</div>
<div class="t" style="left:967px;width:800px;text-align:right;top:839.2px;font-size:22.5px;line-height:30px;color:#e23d28;font-weight:normal;font-style:italic;">-846,00 &euro;</div>
<div style="position:absolute;left:1785px;top:833px;width:118px;height:34px;border-radius:7px;background:#a47ff5;"></div>
<div class="t" style="left:1790.5px;top:835.0px;font-size:22px;line-height:30px;color:#ffffff;font-weight:bold;font-style:normal;"><span id="fit52" style="display:inline-block;transform:scaleX(0.9283);transform-origin:left center;">Auto</span></div>
<div style="position:absolute;left:40px;top:926px;width:2012px;height:2px;background:#e3e3e3;"></div>
<svg style="position:absolute;left:46px;top:887px" width="32" height="32" viewBox="0 0 32 32"><circle cx="16" cy="16" r="16" fill="#7d7d7d"/><path d="M6.8 15.6 L13.6 22.6 L25.6 9.8" fill="none" stroke="#ffffff" stroke-width="4.6"/></svg>
<div class="t" style="left:94px;top:887.2px;font-size:22.5px;line-height:30px;color:#1a1a1a;font-weight:normal;font-style:normal;">16/02/25</div>
<div class="t" style="left:230px;top:887.2px;font-size:22.5px;line-height:30px;color:#1a1a1a;font-weight:normal;font-style:normal;"><span id="fit53" style="display:inline-block;transform:scaleX(0.9814);transform-origin:left center;">Supermercato</span></div>
<div class="t" style="left:1058px;top:887.2px;font-size:22.5px;line-height:30px;color:#1a1a1a;font-weight:normal;font-style:normal;"><span id="fit54" style="display:inline-block;transform:scaleX(0.9890);transform-origin:left center;">Carta di credito</span></div>
<div class="t" style="left:792px;width:800px;text-align:right;top:891.2px;font-size:22.5px;line-height:30px;color:#e23d28;font-weight:bold;font-style:normal;">-40,00 &euro;</div>
<div class="t" style="left:967px;width:800px;text-align:right;top:891.2px;font-size:22.5px;line-height:30px;color:#e23d28;font-weight:normal;font-style:italic;">-797,00 &euro;</div>
<div style="position:absolute;left:1785px;top:885px;width:118px;height:34px;border-radius:7px;background:#ee76c0;"></div>
<div class="t" style="left:1790.5px;top:887.0px;font-size:22px;line-height:30px;color:#ffffff;font-weight:bold;font-style:normal;"><span id="fit55" style="display:inline-block;transform:scaleX(0.9511);transform-origin:left center;">Cibo</span></div>
<svg style="position:absolute;left:46px;top:939px" width="32" height="32" viewBox="0 0 32 32"><circle cx="16" cy="16" r="16" fill="#7d7d7d"/><path d="M6.8 15.6 L13.6 22.6 L25.6 9.8" fill="none" stroke="#ffffff" stroke-width="4.6"/></svg>
<div class="t" style="left:94px;top:939.2px;font-size:22.5px;line-height:30px;color:#1a1a1a;font-weight:normal;font-style:normal;">09/02/25</div>
<div class="t" style="left:230px;top:939.2px;font-size:22.5px;line-height:30px;color:#1a1a1a;font-weight:normal;font-style:normal;"><span id="fit56" style="display:inline-block;transform:scaleX(0.9639);transform-origin:left center;">Farmacia</span></div>
<div class="t" style="left:1058px;top:939.2px;font-size:22.5px;line-height:30px;color:#1a1a1a;font-weight:normal;font-style:normal;"><span id="fit57" style="display:inline-block;transform:scaleX(0.9890);transform-origin:left center;">Carta di credito</span></div>
<div class="t" style="left:792px;width:800px;text-align:right;top:943.2px;font-size:22.5px;line-height:30px;color:#e23d28;font-weight:bold;font-style:normal;">-12,00 &euro;</div>
<div class="t" style="left:967px;width:800px;text-align:right;top:943.2px;font-size:22.5px;line-height:30px;color:#e23d28;font-weight:normal;font-style:italic;">-757,00 &euro;</div>
<div style="position:absolute;left:1785px;top:937px;width:118px;height:34px;border-radius:7px;background:#57bd43;"></div>
<div class="t" style="left:1790.5px;top:939.0px;font-size:22px;line-height:30px;color:#ffffff;font-weight:bold;font-style:normal;"><span id="fit58" style="display:inline-block;transform:scaleX(0.9420);transform-origin:left center;">Salute</span></div>
<div style="position:absolute;left:30px;top:980px;width:2042px;height:96px;background:#dcdcdc;"></div>
<svg style="position:absolute;left:46px;top:993px" width="32" height="32" viewBox="0 0 32 32"><circle cx="16" cy="16" r="16" fill="#6f6f6f"/><path d="M6.8 15.6 L13.6 22.6 L25.6 9.8" fill="none" stroke="#dedede" stroke-width="4.6"/></svg>
<div class="t" style="left:94px;top:991.2px;font-size:22.5px;line-height:30px;color:#1a1a1a;font-weight:normal;font-style:normal;">08/02/25</div>
<div class="t" style="left:230px;top:991.2px;font-size:22.5px;line-height:30px;color:#1a1a1a;font-weight:normal;font-style:normal;"><span id="fit59" style="display:inline-block;transform:scaleX(0.9728);transform-origin:left center;">Hotel</span></div>
<div class="t" style="left:1058px;top:991.2px;font-size:22.5px;line-height:30px;color:#1a1a1a;font-weight:normal;font-style:normal;"><span id="fit60" style="display:inline-block;transform:scaleX(0.9890);transform-origin:left center;">Carta di credito</span></div>
<div class="t" style="left:792px;width:800px;text-align:right;top:995.2px;font-size:22.5px;line-height:30px;color:#e23d28;font-weight:bold;font-style:normal;">-1.200,00 &euro;</div>
<div class="t" style="left:967px;width:800px;text-align:right;top:995.2px;font-size:22.5px;line-height:30px;color:#e23d28;font-weight:normal;font-style:italic;">-745,00 &euro;</div>
<div style="position:absolute;left:1785px;top:989px;width:118px;height:34px;border-radius:7px;background:#93fcfc;"></div>
<div class="t" style="left:1790.5px;top:991.0px;font-size:22px;line-height:30px;color:#4a8b8b;font-weight:bold;font-style:normal;"><span id="fit61" style="display:inline-block;transform:scaleX(0.9707);transform-origin:left center;">Vacanze</span></div>
<div style="position:absolute;left:46px;top:1038px;width:32px;height:32px;box-sizing:border-box;background:#93fcfc;border:2px solid #4a8989;"></div>
<div class="t" style="left:1255px;width:800px;text-align:right;top:1040.0px;font-size:22px;line-height:30px;color:#e23d28;font-weight:bold;font-style:normal;">-1.200,00 &euro;</div>
<div style="position:absolute;left:40px;top:1126px;width:2012px;height:2px;background:#e3e3e3;"></div>
<svg style="position:absolute;left:46px;top:1087px" width="32" height="32" viewBox="0 0 32 32"><circle cx="16" cy="16" r="16" fill="#7d7d7d"/><path d="M6.8 15.6 L13.6 22.6 L25.6 9.8" fill="none" stroke="#ffffff" stroke-width="4.6"/></svg>
<div class="t" style="left:94px;top:1087.2px;font-size:22.5px;line-height:30px;color:#1a1a1a;font-weight:normal;font-style:normal;">06/02/25</div>
<div class="t" style="left:230px;top:1087.2px;font-size:22.5px;line-height:30px;color:#1a1a1a;font-weight:normal;font-style:normal;"><span id="fit62" style="display:inline-block;transform:scaleX(0.9814);transform-origin:left center;">Supermercato</span></div>
<div class="t" style="left:1058px;top:1087.2px;font-size:22.5px;line-height:30px;color:#1a1a1a;font-weight:normal;font-style:normal;"><span id="fit63" style="display:inline-block;transform:scaleX(0.9890);transform-origin:left center;">Carta di credito</span></div>
<div class="t" style="left:792px;width:800px;text-align:right;top:1091.2px;font-size:22.5px;line-height:30px;color:#e23d28;font-weight:bold;font-style:normal;">-30,00 &euro;</div>
<div class="t" style="left:967px;width:800px;text-align:right;top:1091.2px;font-size:22.5px;line-height:30px;color:#7b7b7b;font-weight:normal;font-style:italic;">455,00 &euro;</div>
<div style="position:absolute;left:1785px;top:1085px;width:118px;height:34px;border-radius:7px;background:#ee76c0;"></div>
<div class="t" style="left:1790.5px;top:1087.0px;font-size:22px;line-height:30px;color:#ffffff;font-weight:bold;font-style:normal;"><span id="fit64" style="display:inline-block;transform:scaleX(0.9511);transform-origin:left center;">Cibo</span></div>
<div style="position:absolute;left:40px;top:1178px;width:2012px;height:2px;background:#e3e3e3;"></div>
<svg style="position:absolute;left:46px;top:1139px" width="32" height="32" viewBox="0 0 32 32"><circle cx="16" cy="16" r="16" fill="#7d7d7d"/><path d="M6.8 15.6 L13.6 22.6 L25.6 9.8" fill="none" stroke="#ffffff" stroke-width="4.6"/></svg>
<div class="t" style="left:94px;top:1139.2px;font-size:22.5px;line-height:30px;color:#1a1a1a;font-weight:normal;font-style:normal;">05/02/25</div>
<div class="t" style="left:230px;top:1139.2px;font-size:22.5px;line-height:30px;color:#1a1a1a;font-weight:normal;font-style:normal;"><span id="fit65" style="display:inline-block;transform:scaleX(0.9499);transform-origin:left center;">Garage</span></div>
<div class="t" style="left:1058px;top:1139.2px;font-size:22.5px;line-height:30px;color:#1a1a1a;font-weight:normal;font-style:normal;"><span id="fit66" style="display:inline-block;transform:scaleX(0.9890);transform-origin:left center;">Carta di credito</span></div>
<div class="t" style="left:792px;width:800px;text-align:right;top:1143.2px;font-size:22.5px;line-height:30px;color:#e23d28;font-weight:bold;font-style:normal;">-400,00 &euro;</div>
<div class="t" style="left:967px;width:800px;text-align:right;top:1143.2px;font-size:22.5px;line-height:30px;color:#7b7b7b;font-weight:normal;font-style:italic;">485,00 &euro;</div>
<div style="position:absolute;left:1785px;top:1137px;width:118px;height:34px;border-radius:7px;background:#a47ff5;"></div>
<div class="t" style="left:1790.5px;top:1139.0px;font-size:22px;line-height:30px;color:#ffffff;font-weight:bold;font-style:normal;"><span id="fit67" style="display:inline-block;transform:scaleX(0.9283);transform-origin:left center;">Auto</span></div>
<div style="position:absolute;left:40px;top:1230px;width:2012px;height:2px;background:#e3e3e3;"></div>
<svg style="position:absolute;left:46px;top:1191px" width="32" height="32" viewBox="0 0 32 32"><circle cx="16" cy="16" r="16" fill="#7d7d7d"/><path d="M6.8 15.6 L13.6 22.6 L25.6 9.8" fill="none" stroke="#ffffff" stroke-width="4.6"/></svg>
<div class="t" style="left:94px;top:1191.2px;font-size:22.5px;line-height:30px;color:#1a1a1a;font-weight:normal;font-style:normal;">03/02/25</div>
<div class="t" style="left:230px;top:1191.2px;font-size:22.5px;line-height:30px;color:#1a1a1a;font-weight:normal;font-style:normal;"><span id="fit68" style="display:inline-block;transform:scaleX(0.9978);transform-origin:left center;">Affitti</span></div>
<div class="t" style="left:1058px;top:1191.2px;font-size:22.5px;line-height:30px;color:#1a1a1a;font-weight:normal;font-style:normal;"><span id="fit69" style="display:inline-block;transform:scaleX(0.9320);transform-origin:left center;">Ordine permanente</span></div>
<div class="t" style="left:792px;width:800px;text-align:right;top:1195.2px;font-size:22.5px;line-height:30px;color:#e23d28;font-weight:bold;font-style:normal;">-500,00 &euro;</div>
<div class="t" style="left:967px;width:800px;text-align:right;top:1195.2px;font-size:22.5px;line-height:30px;color:#7b7b7b;font-weight:normal;font-style:italic;">885,00 &euro;</div>
<div style="position:absolute;left:1785px;top:1189px;width:118px;height:34px;border-radius:7px;background:#ef785c;"></div>
<div class="t" style="left:1790.5px;top:1191.0px;font-size:22px;line-height:30px;color:#ffffff;font-weight:bold;font-style:normal;"><span id="fit70" style="display:inline-block;transform:scaleX(0.9056);transform-origin:left center;">Affitti</span></div>
<div style="position:absolute;left:40px;top:1282px;width:2012px;height:2px;background:#e3e3e3;"></div>
<svg style="position:absolute;left:46px;top:1243px" width="32" height="32" viewBox="0 0 32 32"><circle cx="16" cy="16" r="16" fill="#7d7d7d"/><path d="M6.8 15.6 L13.6 22.6 L25.6 9.8" fill="none" stroke="#ffffff" stroke-width="4.6"/></svg>
<div class="t" style="left:94px;top:1243.2px;font-size:22.5px;line-height:30px;color:#1a1a1a;font-weight:normal;font-style:normal;">01/02/25</div>
<div class="t" style="left:230px;top:1243.2px;font-size:22.5px;line-height:30px;color:#1a1a1a;font-weight:normal;font-style:normal;"><span id="fit71" style="display:inline-block;transform:scaleX(0.9933);transform-origin:left center;">Stipendio</span></div>
<div class="t" style="left:1058px;top:1243.2px;font-size:22.5px;line-height:30px;color:#1a1a1a;font-weight:normal;font-style:normal;"><span id="fit72" style="display:inline-block;transform:scaleX(0.9830);transform-origin:left center;">Giroconto</span></div>
<div class="t" style="left:792px;width:800px;text-align:right;top:1247.2px;font-size:22.5px;line-height:30px;color:#56c12f;font-weight:bold;font-style:normal;">1.500,00 &euro;</div>
<div class="t" style="left:967px;width:800px;text-align:right;top:1247.2px;font-size:22.5px;line-height:30px;color:#7b7b7b;font-weight:normal;font-style:italic;">1.385,00 &euro;</div>
<div style="position:absolute;left:1785px;top:1241px;width:118px;height:34px;border-radius:7px;background:#a4f54b;"></div>
<div class="t" style="left:1790.5px;top:1243.0px;font-size:22px;line-height:30px;color:#4a8a2a;font-weight:bold;font-style:normal;"><span id="fit73" style="display:inline-block;transform:scaleX(0.9509);transform-origin:left center;">Stipendio</span></div>
<svg style="position:absolute;left:37px;top:1357px" width="20" height="14" viewBox="0 0 20 14"><path d="M2.5 3 L9 9.5 L15.5 3" fill="none" stroke="#7a7a7a" stroke-width="2.8"/></svg>
<div class="t" style="left:82px;top:1348.3px;font-size:22.5px;line-height:30px;color:#5e8fd8;font-weight:bold;font-style:normal;"><span id="fit74" style="display:inline-block;transform:scaleX(1.0402);transform-origin:left center;">gennaio 2025</span></div>
<div class="t" style="left:790.8px;top:1348.0px;font-size:24px;line-height:30px;color:#5e8fd8;font-weight:normal;font-style:normal;">8 transazioni</div>
<div class="t" style="left:947px;top:1348.0px;font-size:24px;line-height:30px;color:#5e8fd8;font-weight:normal;font-style:normal;">Spese : 1.615,00 &euro;</div>
<div class="t" style="left:1168px;top:1348.0px;font-size:24px;line-height:30px;color:#5e8fd8;font-weight:normal;font-style:normal;">Entrate : 1.500,00 &euro;</div>
<div class="t" style="left:1397.5px;top:1348.0px;font-size:24px;line-height:30px;color:#5e8fd8;font-weight:normal;font-style:normal;">Totale : -115,00 &euro;</div>
<div class="t" style="left:1604px;top:1348.0px;font-size:24px;line-height:30px;color:#5e8fd8;font-weight:normal;font-style:normal;">Totale netto : -115,00 &euro;</div>
<div class="t" style="left:1872px;top:1348.0px;font-size:24px;line-height:30px;color:#5e8fd8;font-weight:normal;font-style:normal;">Tasse : 0,00 &euro;</div>
<div style="position:absolute;left:40px;top:1452px;width:2012px;height:2px;background:#e3e3e3;"></div>
<svg style="position:absolute;left:46px;top:1413px" width="32" height="32" viewBox="0 0 32 32"><circle cx="16" cy="16" r="16" fill="#7d7d7d"/><path d="M6.8 15.6 L13.6 22.6 L25.6 9.8" fill="none" stroke="#ffffff" stroke-width="4.6"/></svg>
<div class="t" style="left:94px;top:1413.2px;font-size:22.5px;line-height:30px;color:#1a1a1a;font-weight:normal;font-style:normal;">21/01/25</div>
<div class="t" style="left:230px;top:1413.2px;font-size:22.5px;line-height:30px;color:#1a1a1a;font-weight:normal;font-style:normal;"><span id="fit75" style="display:inline-block;transform:scaleX(0.9591);transform-origin:left center;">iPhone</span></div>
<div class="t" style="left:818px;top:1413.2px;font-size:22.5px;line-height:30px;color:#1a1a1a;font-weight:normal;font-style:normal;"><span id="fit76" style="display:inline-block;transform:scaleX(0.9696);transform-origin:left center;">Apple</span></div>
<div class="t" style="left:1058px;top:1413.2px;font-size:22.5px;line-height:30px;color:#1a1a1a;font-weight:normal;font-style:normal;"><span id="fit77" style="display:inline-block;transform:scaleX(0.9440);transform-origin:left center;">Pagamento elettr...</span></div>
<div class="t" style="left:792px;width:800px;text-align:right;top:1417.2px;font-size:22.5px;line-height:30px;color:#e23d28;font-weight:bold;font-style:normal;">-800,00 &euro;</div>
<div class="t" style="left:967px;width:800px;text-align:right;top:1417.2px;font-size:22.5px;line-height:30px;color:#e23d28;font-weight:normal;font-style:italic;">-115,00 &euro;</div>
<div style="position:absolute;left:1785px;top:1411px;width:118px;height:34px;border-radius:7px;background:#f4b65f;"></div>
<div class="t" style="left:1790.5px;top:1413.0px;font-size:22px;line-height:30px;color:#ffffff;font-weight:bold;font-style:normal;"><span id="fit78" style="display:inline-block;transform:scaleX(0.9059);transform-origin:left center;">Altro</span></div>
<div style="position:absolute;left:40px;top:1504px;width:2012px;height:2px;background:#e3e3e3;"></div>
<svg style="position:absolute;left:46px;top:1465px" width="32" height="32" viewBox="0 0 32 32"><circle cx="16" cy="16" r="16" fill="#7d7d7d"/><path d="M6.8 15.6 L13.6 22.6 L25.6 9.8" fill="none" stroke="#ffffff" stroke-width="4.6"/></svg>
<div class="t" style="left:94px;top:1465.2px;font-size:22.5px;line-height:30px;color:#1a1a1a;font-weight:normal;font-style:normal;">19/01/25</div>
<div class="t" style="left:230px;top:1465.2px;font-size:22.5px;line-height:30px;color:#1a1a1a;font-weight:normal;font-style:normal;"><span id="fit79" style="display:inline-block;transform:scaleX(0.9814);transform-origin:left center;">Supermercato</span></div>
<div class="t" style="left:1058px;top:1465.2px;font-size:22.5px;line-height:30px;color:#1a1a1a;font-weight:normal;font-style:normal;"><span id="fit80" style="display:inline-block;transform:scaleX(0.9200);transform-origin:left center;">Assegno (0001234)</span></div>
<div class="t" style="left:792px;width:800px;text-align:right;top:1469.2px;font-size:22.5px;line-height:30px;color:#e23d28;font-weight:bold;font-style:normal;">-110,00 &euro;</div>
<div class="t" style="left:967px;width:800px;text-align:right;top:1469.2px;font-size:22.5px;line-height:30px;color:#7b7b7b;font-weight:normal;font-style:italic;">685,00 &euro;</div>
<div style="position:absolute;left:1785px;top:1463px;width:118px;height:34px;border-radius:7px;background:#ee76c0;"></div>
<div class="t" style="left:1790.5px;top:1465.0px;font-size:22px;line-height:30px;color:#ffffff;font-weight:bold;font-style:normal;"><span id="fit81" style="display:inline-block;transform:scaleX(0.9511);transform-origin:left center;">Cibo</span></div>
<div style="position:absolute;left:40px;top:1556px;width:2012px;height:2px;background:#e3e3e3;"></div>
<svg style="position:absolute;left:46px;top:1517px" width="32" height="32" viewBox="0 0 32 32"><circle cx="16" cy="16" r="16" fill="#7d7d7d"/><path d="M6.8 15.6 L13.6 22.6 L25.6 9.8" fill="none" stroke="#ffffff" stroke-width="4.6"/></svg>
<div class="t" style="left:94px;top:1517.2px;font-size:22.5px;line-height:30px;color:#1a1a1a;font-weight:normal;font-style:normal;">16/01/25</div>
<div class="t" style="left:230px;top:1517.2px;font-size:22.5px;line-height:30px;color:#1a1a1a;font-weight:normal;font-style:normal;"><span id="fit82" style="display:inline-block;transform:scaleX(0.9699);transform-origin:left center;">Stazione di servizio</span></div>
<div class="t" style="left:1058px;top:1517.2px;font-size:22.5px;line-height:30px;color:#1a1a1a;font-weight:normal;font-style:normal;"><span id="fit83" style="display:inline-block;transform:scaleX(0.9890);transform-origin:left center;">Carta di credito</span></div>
<div class="t" style="left:792px;width:800px;text-align:right;top:1521.2px;font-size:22.5px;line-height:30px;color:#e23d28;font-weight:bold;font-style:normal;">-55,00 &euro;</div>
<div class="t" style="left:967px;width:800px;text-align:right;top:1521.2px;font-size:22.5px;line-height:30px;color:#7b7b7b;font-weight:normal;font-style:italic;">795,00 &euro;</div>
<div style="position:absolute;left:1785px;top:1515px;width:118px;height:34px;border-radius:7px;background:#a47ff5;"></div>
<div class="t" style="left:1790.5px;top:1517.0px;font-size:22px;line-height:30px;color:#ffffff;font-weight:bold;font-style:normal;"><span id="fit84" style="display:inline-block;transform:scaleX(0.9283);transform-origin:left center;">Auto</span></div>
<div style="position:absolute;left:40px;top:1608px;width:2012px;height:2px;background:#e3e3e3;"></div>
<svg style="position:absolute;left:46px;top:1569px" width="32" height="32" viewBox="0 0 32 32"><circle cx="16" cy="16" r="16" fill="#7d7d7d"/><path d="M6.8 15.6 L13.6 22.6 L25.6 9.8" fill="none" stroke="#ffffff" stroke-width="4.6"/></svg>
<div class="t" style="left:94px;top:1569.2px;font-size:22.5px;line-height:30px;color:#1a1a1a;font-weight:normal;font-style:normal;">11/01/25</div>
<div class="t" style="left:230px;top:1569.2px;font-size:22.5px;line-height:30px;color:#1a1a1a;font-weight:normal;font-style:normal;"><span id="fit85" style="display:inline-block;transform:scaleX(0.9814);transform-origin:left center;">Supermercato</span></div>
<div class="t" style="left:1058px;top:1569.2px;font-size:22.5px;line-height:30px;color:#1a1a1a;font-weight:normal;font-style:normal;"><span id="fit86" style="display:inline-block;transform:scaleX(0.9890);transform-origin:left center;">Carta di credito</span></div>
<div class="t" style="left:792px;width:800px;text-align:right;top:1573.2px;font-size:22.5px;line-height:30px;color:#e23d28;font-weight:bold;font-style:normal;">-75,00 &euro;</div>
<div class="t" style="left:967px;width:800px;text-align:right;top:1573.2px;font-size:22.5px;line-height:30px;color:#7b7b7b;font-weight:normal;font-style:italic;">850,00 &euro;</div>
<div style="position:absolute;left:1785px;top:1567px;width:118px;height:34px;border-radius:7px;background:#ee76c0;"></div>
<div class="t" style="left:1790.5px;top:1569.0px;font-size:22px;line-height:30px;color:#ffffff;font-weight:bold;font-style:normal;"><span id="fit87" style="display:inline-block;transform:scaleX(0.9511);transform-origin:left center;">Cibo</span></div>
<div style="position:absolute;left:40px;top:1660px;width:2012px;height:2px;background:#e3e3e3;"></div>
<svg style="position:absolute;left:46px;top:1621px" width="32" height="32" viewBox="0 0 32 32"><circle cx="16" cy="16" r="16" fill="#7d7d7d"/><path d="M6.8 15.6 L13.6 22.6 L25.6 9.8" fill="none" stroke="#ffffff" stroke-width="4.6"/></svg>
<div class="t" style="left:94px;top:1621.2px;font-size:22.5px;line-height:30px;color:#1a1a1a;font-weight:normal;font-style:normal;">10/01/25</div>
<div class="t" style="left:230px;top:1621.2px;font-size:22.5px;line-height:30px;color:#1a1a1a;font-weight:normal;font-style:normal;"><span id="fit88" style="display:inline-block;transform:scaleX(0.9639);transform-origin:left center;">Farmacia</span></div>
<div class="t" style="left:1058px;top:1621.2px;font-size:22.5px;line-height:30px;color:#1a1a1a;font-weight:normal;font-style:normal;"><span id="fit89" style="display:inline-block;transform:scaleX(0.9890);transform-origin:left center;">Carta di credito</span></div>
<div class="t" style="left:792px;width:800px;text-align:right;top:1625.2px;font-size:22.5px;line-height:30px;color:#e23d28;font-weight:bold;font-style:normal;">-25,00 &euro;</div>
<div class="t" style="left:967px;width:800px;text-align:right;top:1625.2px;font-size:22.5px;line-height:30px;color:#7b7b7b;font-weight:normal;font-style:italic;">925,00 &euro;</div>
<div style="position:absolute;left:1785px;top:1619px;width:118px;height:34px;border-radius:7px;background:#57bd43;"></div>
<div class="t" style="left:1790.5px;top:1621.0px;font-size:22px;line-height:30px;color:#ffffff;font-weight:bold;font-style:normal;"><span id="fit90" style="display:inline-block;transform:scaleX(0.9420);transform-origin:left center;">Salute</span></div>
<div style="position:absolute;left:40px;top:1712px;width:2012px;height:2px;background:#e3e3e3;"></div>
<svg style="position:absolute;left:46px;top:1673px" width="32" height="32" viewBox="0 0 32 32"><circle cx="16" cy="16" r="16" fill="#7d7d7d"/><path d="M6.8 15.6 L13.6 22.6 L25.6 9.8" fill="none" stroke="#ffffff" stroke-width="4.6"/></svg>
<div class="t" style="left:94px;top:1673.2px;font-size:22.5px;line-height:30px;color:#1a1a1a;font-weight:normal;font-style:normal;">04/01/25</div>
<div class="t" style="left:230px;top:1673.2px;font-size:22.5px;line-height:30px;color:#1a1a1a;font-weight:normal;font-style:normal;"><span id="fit91" style="display:inline-block;transform:scaleX(0.9814);transform-origin:left center;">Supermercato</span></div>
<div class="t" style="left:1058px;top:1673.2px;font-size:22.5px;line-height:30px;color:#1a1a1a;font-weight:normal;font-style:normal;"><span id="fit92" style="display:inline-block;transform:scaleX(0.9890);transform-origin:left center;">Carta di credito</span></div>
<div class="t" style="left:792px;width:800px;text-align:right;top:1677.2px;font-size:22.5px;line-height:30px;color:#e23d28;font-weight:bold;font-style:normal;">-50,00 &euro;</div>
<div class="t" style="left:967px;width:800px;text-align:right;top:1677.2px;font-size:22.5px;line-height:30px;color:#7b7b7b;font-weight:normal;font-style:italic;">950,00 &euro;</div>
<div style="position:absolute;left:1785px;top:1671px;width:118px;height:34px;border-radius:7px;background:#ee76c0;"></div>
<div class="t" style="left:1790.5px;top:1673.0px;font-size:22px;line-height:30px;color:#ffffff;font-weight:bold;font-style:normal;"><span id="fit93" style="display:inline-block;transform:scaleX(0.9511);transform-origin:left center;">Cibo</span></div>
<div style="position:absolute;left:40px;top:1764px;width:2012px;height:2px;background:#e3e3e3;"></div>
<svg style="position:absolute;left:46px;top:1725px" width="32" height="32" viewBox="0 0 32 32"><circle cx="16" cy="16" r="16" fill="#7d7d7d"/><path d="M6.8 15.6 L13.6 22.6 L25.6 9.8" fill="none" stroke="#ffffff" stroke-width="4.6"/></svg>
<div class="t" style="left:94px;top:1725.2px;font-size:22.5px;line-height:30px;color:#1a1a1a;font-weight:normal;font-style:normal;">03/01/25</div>
<div class="t" style="left:230px;top:1725.2px;font-size:22.5px;line-height:30px;color:#1a1a1a;font-weight:normal;font-style:normal;"><span id="fit94" style="display:inline-block;transform:scaleX(0.9978);transform-origin:left center;">Affitti</span></div>
<div class="t" style="left:1058px;top:1725.2px;font-size:22.5px;line-height:30px;color:#1a1a1a;font-weight:normal;font-style:normal;"><span id="fit95" style="display:inline-block;transform:scaleX(0.9320);transform-origin:left center;">Ordine permanente</span></div>
<div class="t" style="left:792px;width:800px;text-align:right;top:1729.2px;font-size:22.5px;line-height:30px;color:#e23d28;font-weight:bold;font-style:normal;">-500,00 &euro;</div>
<div class="t" style="left:967px;width:800px;text-align:right;top:1729.2px;font-size:22.5px;line-height:30px;color:#7b7b7b;font-weight:normal;font-style:italic;">1.000,00 &euro;</div>
<div style="position:absolute;left:1785px;top:1723px;width:118px;height:34px;border-radius:7px;background:#ef785c;"></div>
<div class="t" style="left:1790.5px;top:1725.0px;font-size:22px;line-height:30px;color:#ffffff;font-weight:bold;font-style:normal;"><span id="fit96" style="display:inline-block;transform:scaleX(0.9056);transform-origin:left center;">Affitti</span></div>
<div style="position:absolute;left:40px;top:1816px;width:2012px;height:2px;background:#e3e3e3;"></div>
<svg style="position:absolute;left:46px;top:1777px" width="32" height="32" viewBox="0 0 32 32"><circle cx="16" cy="16" r="16" fill="#7d7d7d"/><path d="M6.8 15.6 L13.6 22.6 L25.6 9.8" fill="none" stroke="#ffffff" stroke-width="4.6"/></svg>
<div class="t" style="left:94px;top:1777.2px;font-size:22.5px;line-height:30px;color:#1a1a1a;font-weight:normal;font-style:normal;">01/01/25</div>
<div class="t" style="left:230px;top:1777.2px;font-size:22.5px;line-height:30px;color:#1a1a1a;font-weight:normal;font-style:normal;"><span id="fit97" style="display:inline-block;transform:scaleX(0.9933);transform-origin:left center;">Stipendio</span></div>
<div class="t" style="left:1058px;top:1777.2px;font-size:22.5px;line-height:30px;color:#1a1a1a;font-weight:normal;font-style:normal;"><span id="fit98" style="display:inline-block;transform:scaleX(0.9830);transform-origin:left center;">Giroconto</span></div>
<div class="t" style="left:792px;width:800px;text-align:right;top:1781.2px;font-size:22.5px;line-height:30px;color:#56c12f;font-weight:bold;font-style:normal;">1.500,00 &euro;</div>
<div class="t" style="left:967px;width:800px;text-align:right;top:1781.2px;font-size:22.5px;line-height:30px;color:#7b7b7b;font-weight:normal;font-style:italic;">1.500,00 &euro;</div>
<div style="position:absolute;left:1785px;top:1775px;width:118px;height:34px;border-radius:7px;background:#a4f54b;"></div>
<div class="t" style="left:1790.5px;top:1777.0px;font-size:22px;line-height:30px;color:#4a8a2a;font-weight:bold;font-style:normal;"><span id="fit99" style="display:inline-block;transform:scaleX(0.9509);transform-origin:left center;">Stipendio</span></div>
<div style="position:absolute;left:2072px;top:91px;width:2px;height:1717px;background:#ababab;"></div>
<div style="position:absolute;left:2074px;top:91px;width:416px;height:1717px;background:#e5e5e5;"></div>
<div style="position:absolute;left:2074px;top:91px;width:416px;height:43px;background:linear-gradient(#f9f9f9,#ebebeb);"></div>
<div style="position:absolute;left:2074px;top:134px;width:416px;height:2px;background:#999999;"></div>
<div class="t" style="left:2090.4px;top:98.0px;font-size:21.5px;line-height:30px;color:#4a4a4a;font-weight:bold;font-style:normal;"><span id="fit100" style="display:inline-block;transform:scaleX(0.9795);transform-origin:left center;">1 transazione</span></div>
<svg style="position:absolute;left:2403px;top:103px" width="22" height="22" viewBox="0 0 22 22"><circle cx="11" cy="11" r="9.4" fill="none" stroke="#6a6a6a" stroke-width="1.6"/><circle cx="6.8" cy="11" r="1.3" fill="#6a6a6a"/><circle cx="11" cy="11" r="1.3" fill="#6a6a6a"/><circle cx="15.2" cy="11" r="1.3" fill="#6a6a6a"/></svg>
<svg style="position:absolute;left:2441px;top:105px" width="18" height="18" viewBox="0 0 18 18"><path d="M9 1 L9 17 M1 9 L17 9" stroke="#5a5a5a" stroke-width="3.2"/></svg>
<div class="t" style="left:1460px;width:800px;text-align:right;top:158.0px;font-size:20.5px;line-height:30px;color:#505050;font-weight:normal;font-style:normal;"><span id="fit101" style="display:inline-block;transform:scaleX(1.0307);transform-origin:right center;">Conto</span></div>
<div style="position:absolute;left:2278px;top:152px;width:200px;height:40px;box-sizing:border-box;border-radius:10px;background:#fff;box-shadow:0 0.5px 1.5px rgba(0,0,0,0.33), 0 0 0 0.5px rgba(0,0,0,0.06);"></div>
<div style="position:absolute;left:2442px;top:156px;width:32px;height:32px;border-radius:8px;background:linear-gradient(#4a94f8,#2c7ef5);"></div>
<svg style="position:absolute;left:2442px;top:156px" width="32" height="32" viewBox="0 0 32 32"><path d="M9.5 13.5 L16 7 L22.5 13.5 M9.5 18.5 L16 25 L22.5 18.5" fill="none" stroke="#fff" stroke-width="2.5"/></svg>
<div class="t" style="left:2334.8px;top:158.5px;font-size:20.5px;line-height:30px;color:#1c1c1c;font-weight:normal;font-style:normal;"><span id="fit102" style="display:inline-block;transform:scaleX(1.0103);transform-origin:left center;">Assegno</span></div>
<svg style="position:absolute;left:2293px;top:159px" width="34" height="27" viewBox="0 0 34 27"><path d="M16.5 0.5 L31.5 8 L31.5 9.5 L1.5 9.5 L1.5 8 Z" fill="none" stroke="#1c1c1c" stroke-width="1.8"/>
<rect x="4" y="11" width="25" height="1.8" fill="#1c1c1c"/>
<rect x="6.3" y="13" width="2.4" height="8" fill="#1c1c1c"/><rect x="11.5" y="13" width="2.4" height="8" fill="#1c1c1c"/><rect x="16.7" y="13" width="2.4" height="8" fill="#1c1c1c"/><rect x="21.9" y="13" width="2.4" height="8" fill="#1c1c1c"/><rect x="27" y="13" width="0.1" height="8" fill="#1c1c1c"/>
<rect x="3" y="21.6" width="27" height="1.8" fill="#1c1c1c"/><rect x="0.5" y="24.4" width="32" height="1.8" fill="#1c1c1c"/></svg>
<div class="t" style="left:1460px;width:800px;text-align:right;top:214.0px;font-size:20.5px;line-height:30px;color:#505050;font-weight:normal;font-style:normal;"><span id="fit103" style="display:inline-block;transform:scaleX(1.0462);transform-origin:right center;">Trasferisci a</span></div>
<div style="position:absolute;left:2278px;top:208px;width:200px;height:40px;box-sizing:border-box;border-radius:10px;background:#fff;box-shadow:0 0.5px 1.5px rgba(0,0,0,0.33), 0 0 0 0.5px rgba(0,0,0,0.06);"></div>
<div style="position:absolute;left:2442px;top:212px;width:32px;height:32px;border-radius:8px;background:linear-gradient(#4a94f8,#2c7ef5);"></div>
<svg style="position:absolute;left:2442px;top:212px" width="32" height="32" viewBox="0 0 32 32"><path d="M9.5 13.5 L16 7 L22.5 13.5 M9.5 18.5 L16 25 L22.5 18.5" fill="none" stroke="#fff" stroke-width="2.5"/></svg>
<div class="t" style="left:1460px;width:800px;text-align:right;top:270.0px;font-size:20.5px;line-height:30px;color:#505050;font-weight:normal;font-style:normal;"><span id="fit104" style="display:inline-block;transform:scaleX(1.0057);transform-origin:right center;">Nome</span></div>
<div style="position:absolute;left:2278px;top:264px;width:200px;height:40px;box-sizing:border-box;border-radius:10px;background:#fff;box-shadow:0 0.5px 1.5px rgba(0,0,0,0.33), 0 0 0 0.5px rgba(0,0,0,0.06);"></div>
<div style="position:absolute;left:2442px;top:268px;width:32px;height:32px;border-radius:8px;background:linear-gradient(#4a94f8,#2c7ef5);"></div>
<svg style="position:absolute;left:2442px;top:268px" width="32" height="32" viewBox="0 0 32 32"><path d="M9.5 12.5 L16 19 L22.5 12.5" fill="none" stroke="#fff" stroke-width="2.6"/></svg>
<div class="t" style="left:2299px;top:270.5px;font-size:20.5px;line-height:30px;color:#1c1c1c;font-weight:normal;font-style:normal;"><span id="fit105" style="display:inline-block;transform:scaleX(1.0238);transform-origin:left center;">Hotel</span></div>
<div class="t" style="left:1460px;width:800px;text-align:right;top:326.0px;font-size:20.5px;line-height:30px;color:#505050;font-weight:normal;font-style:normal;"><span id="fit106" style="display:inline-block;transform:scaleX(1.0444);transform-origin:right center;">Stato</span></div>
<div style="position:absolute;left:2278px;top:320px;width:200px;height:40px;box-sizing:border-box;border-radius:10px;background:#fff;box-shadow:0 0.5px 1.5px rgba(0,0,0,0.33), 0 0 0 0.5px rgba(0,0,0,0.06);"></div>
<div style="position:absolute;left:2442px;top:324px;width:32px;height:32px;border-radius:8px;background:linear-gradient(#4a94f8,#2c7ef5);"></div>
<svg style="position:absolute;left:2442px;top:324px" width="32" height="32" viewBox="0 0 32 32"><path d="M9.5 13.5 L16 7 L22.5 13.5 M9.5 18.5 L16 25 L22.5 18.5" fill="none" stroke="#fff" stroke-width="2.5"/></svg>
<div class="t" style="left:2334.8px;top:326.5px;font-size:20.5px;line-height:30px;color:#1c1c1c;font-weight:normal;font-style:normal;"><span id="fit107" style="display:inline-block;transform:scaleX(0.9617);transform-origin:left center;">Evaso</span></div>
<svg style="position:absolute;left:2294px;top:324px" width="32" height="32" viewBox="0 0 32 32"><circle cx="16" cy="16" r="15.8" fill="#232323"/><path d="M8 16.3 L13.8 22 L24.2 11" fill="none" stroke="#fff" stroke-width="3.6"/></svg>
<div class="t" style="left:1460px;width:800px;text-align:right;top:380.5px;font-size:20.5px;line-height:30px;color:#505050;font-weight:normal;font-style:normal;"><span id="fit108" style="display:inline-block;transform:scaleX(0.9928);transform-origin:right center;">Data</span></div>
<div style="position:absolute;left:2279.5px;top:378.0px;width:196.5px;height:33px;box-sizing:border-box;background:#fff;border:1px solid #d6d6d6;border-bottom-color:#b5b5b5;"></div>
<div class="t" style="left:2287px;top:381.0px;font-size:20.5px;line-height:30px;color:#1c1c1c;font-weight:normal;font-style:normal;"><span id="fit109" style="display:inline-block;transform:scaleX(1.0775);transform-origin:left center;">08/02/25</span></div>
<svg style="position:absolute;left:2432px;top:383.2px" width="40" height="24" viewBox="0 0 40 24"><rect x="0" y="0" width="26" height="21.3" fill="none" stroke="#7a7a7a" stroke-width="1.6"/><rect x="0" y="0" width="26" height="3" fill="#7a7a7a"/><line x1="8.7" y1="0" x2="8.7" y2="21.3" stroke="#7a7a7a" stroke-width="1.6"/><line x1="17.3" y1="0" x2="17.3" y2="21.3" stroke="#7a7a7a" stroke-width="1.6"/><line x1="0" y1="9.1" x2="26" y2="9.1" stroke="#7a7a7a" stroke-width="1.6"/><line x1="0" y1="15.2" x2="26" y2="15.2" stroke="#7a7a7a" stroke-width="1.6"/><path d="M28.3 14 L38 14 L33.2 21.5 Z" fill="#7a7a7a"/></svg>
<div class="t" style="left:1460px;width:800px;text-align:right;top:432.0px;font-size:20.5px;line-height:30px;color:#505050;font-weight:normal;font-style:normal;"><span id="fit110" style="display:inline-block;transform:scaleX(1.0221);transform-origin:right center;">Data valuta</span></div>
<div style="position:absolute;left:2279.5px;top:429.5px;width:196.5px;height:33px;box-sizing:border-box;background:#fff;border:1px solid #d6d6d6;border-bottom-color:#b5b5b5;"></div>
<div class="t" style="left:2287px;top:432.5px;font-size:20.5px;line-height:30px;color:#1c1c1c;font-weight:normal;font-style:normal;"><span id="fit111" style="display:inline-block;transform:scaleX(1.0775);transform-origin:left center;">08/02/25</span></div>
<svg style="position:absolute;left:2432px;top:434.7px" width="40" height="24" viewBox="0 0 40 24"><rect x="0" y="0" width="26" height="21.3" fill="none" stroke="#7a7a7a" stroke-width="1.6"/><rect x="0" y="0" width="26" height="3" fill="#7a7a7a"/><line x1="8.7" y1="0" x2="8.7" y2="21.3" stroke="#7a7a7a" stroke-width="1.6"/><line x1="17.3" y1="0" x2="17.3" y2="21.3" stroke="#7a7a7a" stroke-width="1.6"/><line x1="0" y1="9.1" x2="26" y2="9.1" stroke="#7a7a7a" stroke-width="1.6"/><line x1="0" y1="15.2" x2="26" y2="15.2" stroke="#7a7a7a" stroke-width="1.6"/><path d="M28.3 14 L38 14 L33.2 21.5 Z" fill="#7a7a7a"/></svg>
<div class="t" style="left:1460px;width:800px;text-align:right;top:484.0px;font-size:20.5px;line-height:30px;color:#505050;font-weight:normal;font-style:normal;"><span id="fit112" style="display:inline-block;transform:scaleX(1.0446);transform-origin:right center;">Importo</span></div>
<div style="position:absolute;left:2274.5px;top:476.5px;width:207px;height:43px;border-radius:9px;background:#80a6e6;"></div>
<div style="position:absolute;left:2280.5px;top:483px;width:195px;height:30.5px;background:#fff;"></div>
<div style="position:absolute;left:2286px;top:486.5px;width:102px;height:25px;background:#b9d7fb;"></div>
<div class="t" style="left:2287px;top:485.0px;font-size:20.5px;line-height:30px;color:#1c1c1c;font-weight:normal;font-style:normal;"><span id="fit113" style="display:inline-block;transform:scaleX(1.0113);transform-origin:left center;">1.200,00 &euro;</span></div>
<svg style="position:absolute;left:2444px;top:487px" width="22" height="24" viewBox="0 0 22 24"><path d="M7.6 0 L15.8 0 L15.8 10 L21.5 10 L11.7 23.5 L0 10 L7.6 10 Z" fill="#e63b25"/></svg>
<div style="position:absolute;left:2278px;top:528.5px;width:28px;height:28px;border-radius:6px;background:linear-gradient(#4a94f8,#2c7ef5);"></div>
<svg style="position:absolute;left:2278px;top:528.5px" width="28" height="28" viewBox="0 0 28 28"><path d="M6.5 14.5 L11.8 20.5 L21.5 7.5" fill="none" stroke="#fff" stroke-width="3.2"/></svg>
<div class="t" style="left:2319px;top:531.5px;font-size:20.5px;line-height:30px;color:#1c1c1c;font-weight:normal;font-style:normal;"><span id="fit114" style="display:inline-block;transform:scaleX(0.9827);transform-origin:left center;">Fai la somma d...</span></div>
<div class="t" style="left:1460px;width:800px;text-align:right;top:582.0px;font-size:20.5px;line-height:30px;color:#505050;font-weight:normal;font-style:normal;"><span id="fit115" style="display:inline-block;transform:scaleX(1.0173);transform-origin:right center;">Commento</span></div>
<div style="position:absolute;left:2278px;top:576px;width:200px;height:40px;box-sizing:border-box;border-radius:10px;background:#fff;box-shadow:0 0.5px 1.5px rgba(0,0,0,0.33), 0 0 0 0.5px rgba(0,0,0,0.06);"></div>
<div style="position:absolute;left:2442px;top:580px;width:32px;height:32px;border-radius:8px;background:linear-gradient(#4a94f8,#2c7ef5);"></div>
<svg style="position:absolute;left:2442px;top:580px" width="32" height="32" viewBox="0 0 32 32"><path d="M9.5 12.5 L16 19 L22.5 12.5" fill="none" stroke="#fff" stroke-width="2.6"/></svg>
<div class="t" style="left:1460px;width:800px;text-align:right;top:638.0px;font-size:20.5px;line-height:30px;color:#505050;font-weight:normal;font-style:normal;"><span id="fit116" style="display:inline-block;transform:scaleX(1.0455);transform-origin:right center;">Beneficiario</span></div>
<div style="position:absolute;left:2278px;top:632px;width:200px;height:40px;box-sizing:border-box;border-radius:10px;background:#fff;box-shadow:0 0.5px 1.5px rgba(0,0,0,0.33), 0 0 0 0.5px rgba(0,0,0,0.06);"></div>
<div style="position:absolute;left:2442px;top:636px;width:32px;height:32px;border-radius:8px;background:linear-gradient(#4a94f8,#2c7ef5);"></div>
<svg style="position:absolute;left:2442px;top:636px" width="32" height="32" viewBox="0 0 32 32"><path d="M9.5 12.5 L16 19 L22.5 12.5" fill="none" stroke="#fff" stroke-width="2.6"/></svg>
<div class="t" style="left:1460px;width:800px;text-align:right;top:694.0px;font-size:20.5px;line-height:30px;color:#505050;font-weight:normal;font-style:normal;"><span id="fit117" style="display:inline-block;transform:scaleX(1.0224);transform-origin:right center;">Tipo</span></div>
<div style="position:absolute;left:2278px;top:688px;width:200px;height:40px;box-sizing:border-box;border-radius:10px;background:#fff;box-shadow:0 0.5px 1.5px rgba(0,0,0,0.33), 0 0 0 0.5px rgba(0,0,0,0.06);"></div>
<div style="position:absolute;left:2442px;top:692px;width:32px;height:32px;border-radius:8px;background:linear-gradient(#4a94f8,#2c7ef5);"></div>
<svg style="position:absolute;left:2442px;top:692px" width="32" height="32" viewBox="0 0 32 32"><path d="M9.5 12.5 L16 19 L22.5 12.5" fill="none" stroke="#fff" stroke-width="2.6"/></svg>
<div class="t" style="left:2290.5px;top:694.5px;font-size:20.5px;line-height:30px;color:#1c1c1c;font-weight:normal;font-style:normal;"><span id="fit118" style="display:inline-block;transform:scaleX(1.0413);transform-origin:left center;">Carta di cred...</span></div>
<div class="t" style="left:1460px;width:800px;text-align:right;top:750.0px;font-size:20.5px;line-height:30px;color:#505050;font-weight:normal;font-style:normal;"><span id="fit119" style="display:inline-block;transform:scaleX(1.0011);transform-origin:right center;">Numero</span></div>
<div style="position:absolute;left:2278px;top:744px;width:200px;height:40px;box-sizing:border-box;border-radius:10px;background:#fff;box-shadow:0 0.5px 1.5px rgba(0,0,0,0.33), 0 0 0 0.5px rgba(0,0,0,0.06);"></div>
<div style="position:absolute;left:2442px;top:748px;width:32px;height:32px;border-radius:8px;background:linear-gradient(#4a94f8,#2c7ef5);"></div>
<svg style="position:absolute;left:2442px;top:748px" width="32" height="32" viewBox="0 0 32 32"><path d="M9.5 12.5 L16 19 L22.5 12.5" fill="none" stroke="#fff" stroke-width="2.6"/></svg>
<div class="t" style="left:1460px;width:800px;text-align:right;top:806.0px;font-size:20.5px;line-height:30px;color:#505050;font-weight:normal;font-style:normal;"><span id="fit120" style="display:inline-block;transform:scaleX(1.0321);transform-origin:right center;">Collegamenti</span></div>
<div style="position:absolute;left:2278px;top:800px;width:200px;height:40px;box-sizing:border-box;border-radius:10px;background:#fff;box-shadow:0 0.5px 1.5px rgba(0,0,0,0.33), 0 0 0 0.5px rgba(0,0,0,0.06);"></div>
<div style="position:absolute;left:2442px;top:804px;width:32px;height:32px;border-radius:8px;background:linear-gradient(#4a94f8,#2c7ef5);"></div>
<svg style="position:absolute;left:2442px;top:804px" width="32" height="32" viewBox="0 0 32 32"><path d="M9.5 12.5 L16 19 L22.5 12.5" fill="none" stroke="#fff" stroke-width="2.6"/></svg>
<div class="t" style="left:2294.5px;top:806.5px;font-size:20.5px;line-height:30px;color:#1c1c1c;font-weight:normal;font-style:normal;"><span id="fit121" style="display:inline-block;transform:scaleX(1.0552);transform-origin:left center;">0 link</span></div>
<div style="position:absolute;left:2074px;top:856px;width:416px;height:2px;background:#a9a9a9;"></div>
<div style="position:absolute;left:2074px;top:858px;width:416px;height:42px;background:linear-gradient(#f9f9f9,#ebebeb);"></div>
<div style="position:absolute;left:2074px;top:900px;width:416px;height:1.5px;background:#a8a8a8;"></div>
<div class="t" style="left:2090.6px;top:864.0px;font-size:21.5px;line-height:30px;color:#4a4a4a;font-weight:bold;font-style:normal;"><span id="fit122" style="display:inline-block;transform:scaleX(0.9593);transform-origin:left center;">1 divisione</span></div>
<svg style="position:absolute;left:2395px;top:870px" width="34" height="18" viewBox="0 0 34 18"><path d="M9 1 L9 17 M1 9 L17 9" stroke="#5a5a5a" stroke-width="3.2"/><path d="M21 6.5 L29 6.5 L25 11 Z" fill="#6a6a6a"/></svg>
<div style="position:absolute;left:2441.5px;top:878px;width:17px;height:3.2px;background:#5a5a5a;"></div>
<div style="position:absolute;left:2074px;top:901.5px;width:416px;height:64.5px;background:#dcdcdc;"></div>
<div class="t" style="left:1388.6999999999998px;width:800px;text-align:right;top:919.5px;font-size:20.5px;line-height:30px;color:#666;font-weight:normal;font-style:normal;"><span id="fit123" style="display:inline-block;transform:scaleX(0.9955);transform-origin:right center;">100%</span></div>
<div class="t" style="left:1529px;width:800px;text-align:right;top:919.5px;font-size:20.5px;line-height:30px;color:#e63b25;font-weight:normal;font-style:normal;"><span id="fit124" style="display:inline-block;transform:scaleX(1.0422);transform-origin:right center;">1.200,00 &euro;</span></div>
<svg style="position:absolute;left:2340px;top:923px" width="22" height="24" viewBox="0 0 22 24"><path d="M7.6 0 L15.8 0 L15.8 10 L21.5 10 L11.7 23.5 L0 10 L7.6 10 Z" fill="#e63b25"/></svg>
<div style="position:absolute;left:2382px;top:918px;width:32px;height:32px;box-sizing:border-box;background:#93fcfc;border:2px solid #4a8989;"></div>
<div class="t" style="left:2430.4px;top:919.5px;font-size:20.5px;line-height:30px;color:#666;font-weight:normal;font-style:normal;"><span id="fit125" style="display:inline-block;transform:scaleX(0.9498);transform-origin:left center;">Va...</span></div>
<div class="t" style="left:1460px;width:800px;text-align:right;top:986.0px;font-size:20.5px;line-height:30px;color:#505050;font-weight:normal;font-style:normal;"><span id="fit126" style="display:inline-block;transform:scaleX(1.0446);transform-origin:right center;">Importo</span></div>
<div style="position:absolute;left:2279.5px;top:983.5px;width:196.5px;height:33px;box-sizing:border-box;background:#fff;border:1px solid #d6d6d6;border-bottom-color:#b5b5b5;"></div>
<div class="t" style="left:2287px;top:986.5px;font-size:20.5px;line-height:30px;color:#1c1c1c;font-weight:normal;font-style:normal;"><span id="fit127" style="display:inline-block;transform:scaleX(1.0319);transform-origin:left center;">1.200,00 &euro;</span></div>
<svg style="position:absolute;left:2444px;top:988.5px" width="22" height="24" viewBox="0 0 22 24"><path d="M7.6 0 L15.8 0 L15.8 10 L21.5 10 L11.7 23.5 L0 10 L7.6 10 Z" fill="#e63b25"/></svg>
<div class="t" style="left:1460px;width:800px;text-align:right;top:1038.0px;font-size:20.5px;line-height:30px;color:#505050;font-weight:normal;font-style:normal;"><span id="fit128" style="display:inline-block;transform:scaleX(1.0257);transform-origin:right center;">Importo ET</span></div>
<div style="position:absolute;left:2279.5px;top:1035.5px;width:196.5px;height:33px;box-sizing:border-box;background:#fff;border:1px solid #d6d6d6;border-bottom-color:#b5b5b5;"></div>
<div class="t" style="left:1460px;width:800px;text-align:right;top:1090.0px;font-size:20.5px;line-height:30px;color:#505050;font-weight:normal;font-style:normal;"><span id="fit129" style="display:inline-block;transform:scaleX(0.9708);transform-origin:right center;">Tasse</span></div>
<div style="position:absolute;left:2279.5px;top:1087.5px;width:196.5px;height:33px;box-sizing:border-box;background:#fff;border:1px solid #d6d6d6;border-bottom-color:#b5b5b5;"></div>
<div class="t" style="left:1460px;width:800px;text-align:right;top:1144.0px;font-size:20.5px;line-height:30px;color:#505050;font-weight:normal;font-style:normal;"><span id="fit130" style="display:inline-block;transform:scaleX(1.0322);transform-origin:right center;">Percentuale tasse</span></div>
<div style="position:absolute;left:2278px;top:1138px;width:200px;height:40px;box-sizing:border-box;border-radius:10px;background:#fff;box-shadow:0 0.5px 1.5px rgba(0,0,0,0.33), 0 0 0 0.5px rgba(0,0,0,0.06);"></div>
<div style="position:absolute;left:2442px;top:1142px;width:32px;height:32px;border-radius:8px;background:linear-gradient(#4a94f8,#2c7ef5);"></div>
<svg style="position:absolute;left:2442px;top:1142px" width="32" height="32" viewBox="0 0 32 32"><path d="M9.5 12.5 L16 19 L22.5 12.5" fill="none" stroke="#fff" stroke-width="2.6"/></svg>
<div class="t" style="left:1460px;width:800px;text-align:right;top:1200.0px;font-size:20.5px;line-height:30px;color:#505050;font-weight:normal;font-style:normal;"><span id="fit131" style="display:inline-block;transform:scaleX(1.0376);transform-origin:right center;">Categoria tasse</span></div>
<div style="position:absolute;left:2278px;top:1194px;width:200px;height:40px;box-sizing:border-box;border-radius:10px;background:#fff;box-shadow:0 0.5px 1.5px rgba(0,0,0,0.33), 0 0 0 0.5px rgba(0,0,0,0.06);"></div>
<div style="position:absolute;left:2442px;top:1198px;width:32px;height:32px;border-radius:8px;background:linear-gradient(#4a94f8,#2c7ef5);"></div>
<svg style="position:absolute;left:2442px;top:1198px" width="32" height="32" viewBox="0 0 32 32"><path d="M9.5 12.5 L16 19 L22.5 12.5" fill="none" stroke="#fff" stroke-width="2.6"/></svg>
<div class="t" style="left:1460px;width:800px;text-align:right;top:1256.0px;font-size:20.5px;line-height:30px;color:#505050;font-weight:normal;font-style:normal;"><span id="fit132" style="display:inline-block;transform:scaleX(1.0271);transform-origin:right center;">Categoria</span></div>
<div style="position:absolute;left:2278px;top:1250px;width:200px;height:40px;box-sizing:border-box;border-radius:10px;background:#fff;box-shadow:0 0.5px 1.5px rgba(0,0,0,0.33), 0 0 0 0.5px rgba(0,0,0,0.06);"></div>
<div style="position:absolute;left:2442px;top:1254px;width:32px;height:32px;border-radius:8px;background:linear-gradient(#4a94f8,#2c7ef5);"></div>
<svg style="position:absolute;left:2442px;top:1254px" width="32" height="32" viewBox="0 0 32 32"><path d="M9.5 13.5 L16 7 L22.5 13.5 M9.5 18.5 L16 25 L22.5 18.5" fill="none" stroke="#fff" stroke-width="2.5"/></svg>
<div class="t" style="left:2335px;top:1256.5px;font-size:20.5px;line-height:30px;color:#1c1c1c;font-weight:normal;font-style:normal;"><span id="fit133" style="display:inline-block;transform:scaleX(1.0094);transform-origin:left center;">Vacanze</span></div>
<div style="position:absolute;left:2294px;top:1254px;width:32px;height:32px;box-sizing:border-box;background:#93fcfc;border:2px solid #4a8989;"></div>
<div class="t" style="left:1460px;width:800px;text-align:right;top:1312.0px;font-size:20.5px;line-height:30px;color:#505050;font-weight:normal;font-style:normal;"><span id="fit134" style="display:inline-block;transform:scaleX(1.0310);transform-origin:right center;">Budget</span></div>
<div style="position:absolute;left:2278px;top:1306px;width:200px;height:40px;box-sizing:border-box;border-radius:10px;background:#fff;box-shadow:0 0.5px 1.5px rgba(0,0,0,0.33), 0 0 0 0.5px rgba(0,0,0,0.06);"></div>
<div style="position:absolute;left:2442px;top:1310px;width:32px;height:32px;border-radius:8px;background:linear-gradient(#4a94f8,#2c7ef5);"></div>
<svg style="position:absolute;left:2442px;top:1310px" width="32" height="32" viewBox="0 0 32 32"><path d="M9.5 13.5 L16 7 L22.5 13.5 M9.5 18.5 L16 25 L22.5 18.5" fill="none" stroke="#fff" stroke-width="2.5"/></svg>
<div class="t" style="left:2334.4px;top:1312.5px;font-size:20.5px;line-height:30px;color:#1c1c1c;font-weight:normal;font-style:normal;"><span id="fit135" style="display:inline-block;transform:scaleX(0.9845);transform-origin:left center;">Nuovo b...</span></div>
<svg style="position:absolute;left:2293px;top:1315px" width="34" height="22" viewBox="0 0 34 22"><path d="M1 18.7 A16 16 0 0 1 33 18.7 L28.4 18.7 A12.4 12.4 0 0 0 3.8 18.7 Z" fill="#1c1c1c"/><circle cx="13.4" cy="18.3" r="3.1" fill="#1c1c1c"/><path d="M12.4 16 L14.6 20.2 L23.3 15.3 Z" fill="#1c1c1c"/></svg>
<div style="position:absolute;left:2279px;top:1358.5px;width:26px;height:26px;box-sizing:border-box;border-radius:6px;background:#fff;box-shadow:0 0 0 0.6px rgba(0,0,0,0.16), 0 0.6px 1px rgba(0,0,0,0.2);"></div>
<div class="t" style="left:2319px;top:1361.5px;font-size:20.5px;line-height:30px;color:#1c1c1c;font-weight:normal;font-style:normal;"><span id="fit136" style="display:inline-block;transform:scaleX(1.0084);transform-origin:left center;">Non includere...</span></div>
<div class="t" style="left:1460px;width:800px;text-align:right;top:1412.0px;font-size:20.5px;line-height:30px;color:#505050;font-weight:normal;font-style:normal;"><span id="fit137" style="display:inline-block;transform:scaleX(1.0173);transform-origin:right center;">Commento</span></div>
<div style="position:absolute;left:2278px;top:1406px;width:200px;height:40px;box-sizing:border-box;border-radius:10px;background:#fff;box-shadow:0 0.5px 1.5px rgba(0,0,0,0.33), 0 0 0 0.5px rgba(0,0,0,0.06);"></div>
<div style="position:absolute;left:2442px;top:1410px;width:32px;height:32px;border-radius:8px;background:linear-gradient(#4a94f8,#2c7ef5);"></div>
<svg style="position:absolute;left:2442px;top:1410px" width="32" height="32" viewBox="0 0 32 32"><path d="M9.5 12.5 L16 19 L22.5 12.5" fill="none" stroke="#fff" stroke-width="2.6"/></svg>
<div class="t" style="left:1460px;width:800px;text-align:right;top:1468.0px;font-size:20.5px;line-height:30px;color:#505050;font-weight:normal;font-style:normal;"><span id="fit138" style="display:inline-block;transform:scaleX(1.0581);transform-origin:right center;">Progetto</span></div>
<div style="position:absolute;left:2278px;top:1462px;width:200px;height:40px;box-sizing:border-box;border-radius:10px;background:#fff;box-shadow:0 0.5px 1.5px rgba(0,0,0,0.33), 0 0 0 0.5px rgba(0,0,0,0.06);"></div>
<div style="position:absolute;left:2442px;top:1466px;width:32px;height:32px;border-radius:8px;background:linear-gradient(#4a94f8,#2c7ef5);"></div>
<svg style="position:absolute;left:2442px;top:1466px" width="32" height="32" viewBox="0 0 32 32"><path d="M9.5 12.5 L16 19 L22.5 12.5" fill="none" stroke="#fff" stroke-width="2.6"/></svg>
<div class="t" style="left:1460px;width:800px;text-align:right;top:1526.0px;font-size:20.5px;line-height:30px;color:#505050;font-weight:normal;font-style:normal;"><span id="fit139" style="display:inline-block;transform:scaleX(1.0513);transform-origin:right center;">Proprietario</span></div>
<div style="position:absolute;left:2279px;top:1520px;width:198px;height:41px;box-sizing:border-box;border-radius:7px;background:linear-gradient(#fdfdfd,#f0f0f0);border:1px solid #d2d2d2;"></div>
<svg style="position:absolute;left:2284px;top:1524px" width="32" height="32" viewBox="0 0 32 32"><defs><clipPath id="avc"><circle cx="16" cy="15.8" r="14.2"/></clipPath></defs>
<rect x="0.9" y="0.9" width="30.2" height="30" rx="4.5" fill="#fff" stroke="#222" stroke-width="1.8"/>
<g clip-path="url(#avc)"><rect x="0" y="0" width="32" height="32" fill="#bcd8ee"/><ellipse cx="7" cy="24" rx="9" ry="9" fill="#a9c27a"/><ellipse cx="27" cy="26" rx="6" ry="6" fill="#b5c98e"/>
<ellipse cx="16.2" cy="17" rx="9.8" ry="13" fill="#c9a08b"/>
<path d="M6.5 19 Q5.5 6 14 4.6 Q24 3.8 26.5 14 L25.5 18 Q24 10.5 19 9.5 Q13 10 10 12 L9.5 20 Z" fill="#3b2b24"/>
<rect x="9.8" y="13.6" width="13.8" height="5.2" rx="1.5" fill="#3a2722"/><rect x="17" y="14" width="6.5" height="4.6" rx="1.5" fill="#8a5a45"/>
<path d="M9.5 21 Q11 31 16.5 31.5 Q22 31 24.5 21 Q22 27 16.5 27.5 Q11.5 27 9.5 21 Z" fill="#4a342a"/></g></svg>
<div class="t" style="left:2322px;top:1527.0px;font-size:23px;line-height:30px;color:#303030;font-weight:bold;font-style:normal;"><span id="fit140" style="display:inline-block;transform:scaleX(0.7017);transform-origin:left center;">Cyril Anger</span></div>
<div class="t" style="left:1460px;width:800px;text-align:right;top:1584.0px;font-size:20.5px;line-height:30px;color:#505050;font-weight:normal;font-style:normal;"><span id="fit141" style="display:inline-block;transform:scaleX(1.0207);transform-origin:right center;">Fattura</span></div>
<div style="position:absolute;left:2278px;top:1578px;width:200px;height:40px;box-sizing:border-box;border-radius:10px;background:#fff;box-shadow:0 0.5px 1.5px rgba(0,0,0,0.33), 0 0 0 0.5px rgba(0,0,0,0.06);"></div>
<div style="position:absolute;left:2442px;top:1582px;width:32px;height:32px;border-radius:8px;background:linear-gradient(#4a94f8,#2c7ef5);"></div>
<svg style="position:absolute;left:2442px;top:1582px" width="32" height="32" viewBox="0 0 32 32"><path d="M9.5 13.5 L16 7 L22.5 13.5 M9.5 18.5 L16 25 L22.5 18.5" fill="none" stroke="#fff" stroke-width="2.5"/></svg>
<div class="t" style="left:1460px;width:800px;text-align:right;top:1629.0px;font-size:20.5px;line-height:30px;color:#505050;font-weight:normal;font-style:normal;"><span id="fit142" style="display:inline-block;transform:scaleX(1.0605);transform-origin:right center;">Statistiche</span></div>
<div style="position:absolute;left:2279px;top:1630.5px;width:26px;height:26px;box-sizing:border-box;border-radius:6px;background:#fff;box-shadow:0 0 0 0.6px rgba(0,0,0,0.16), 0 0.6px 1px rgba(0,0,0,0.2);"></div>
<div class="t" style="left:2319px;top:1633.5px;font-size:20.5px;line-height:30px;color:#1c1c1c;font-weight:normal;font-style:normal;"><span id="fit143" style="display:inline-block;transform:scaleX(1.0084);transform-origin:left center;">Non includere...</span></div>
<div style="position:absolute;left:2279px;top:1674.0px;width:26px;height:26px;box-sizing:border-box;border-radius:6px;background:#fff;box-shadow:0 0 0 0.6px rgba(0,0,0,0.16), 0 0.6px 1px rgba(0,0,0,0.2);"></div>
<div class="t" style="left:2319px;top:1677.0px;font-size:20.5px;line-height:30px;color:#1c1c1c;font-weight:normal;font-style:normal;"><span id="fit144" style="display:inline-block;transform:scaleX(1.0084);transform-origin:left center;">Non includere...</span></div>
<div style="position:absolute;left:2279px;top:1717.5px;width:26px;height:26px;box-sizing:border-box;border-radius:6px;background:#fff;box-shadow:0 0 0 0.6px rgba(0,0,0,0.16), 0 0.6px 1px rgba(0,0,0,0.2);"></div>
<div class="t" style="left:2319px;top:1720.5px;font-size:20.5px;line-height:30px;color:#1c1c1c;font-weight:normal;font-style:normal;"><span id="fit145" style="display:inline-block;transform:scaleX(1.0169);transform-origin:left center;">Rimborso</span></div>
<div style="position:absolute;left:30px;top:1808px;width:2460px;height:2px;background:#acacac;"></div>
<div style="position:absolute;left:2450px;top:1820px;width:40px;height:34px;background:#a39b9b;"></div>
<div style="position:absolute;left:30px;top:1810px;width:2460px;height:41px;background:linear-gradient(#fdfdfd,#f6f6f6);border-bottom-right-radius:22px;"></div>
<div style="position:absolute;left:0px;top:1808px;width:28px;height:44px;background:#dfe1e2;"></div>
<div class="t" style="left:3px;top:1817.5px;font-size:21px;line-height:26px;color:#6b6b6b;font-weight:normal;font-style:normal;">i</div>
<div style="position:absolute;left:0px;top:1851px;width:2490px;height:3px;background:#9f9898;"></div>
<div style="position:absolute;left:28px;top:1808px;width:2px;height:43px;background:#b0b0b0;"></div>
<svg style="position:absolute;left:44px;top:1821px" width="20" height="20" viewBox="0 0 20 20"><path d="M10 1.5 L10 18.5 M1.5 10 L18.5 10" stroke="#666" stroke-width="3"/></svg>
<div style="position:absolute;left:93px;top:1828.5px;width:17px;height:3px;background:#666;"></div>
<svg style="position:absolute;left:133px;top:1814px" width="34" height="33" viewBox="0 0 34 33"><path d="M2 0 L2 30 L33 30" fill="none" stroke="#666" stroke-width="3.8"/><path d="M8 22.5 L15 13.8 L21.5 19 L30 8" fill="none" stroke="#666" stroke-width="3.8"/></svg>
<svg style="position:absolute;left:183px;top:1813px" width="30" height="34" viewBox="0 0 30 34"><path d="M7.5 6.8 L2 6.8 L2 32.5 L28 32.5 L28 6.8 L22.5 6.8" fill="none" stroke="#666" stroke-width="2.2"/><path d="M7.2 5 L11.3 5 L11.3 3.5 Q11.3 1.2 13.5 1.2 L16.5 1.2 Q18.7 1.2 18.7 3.5 L18.7 5 L22.8 5 L22.8 9 L7.2 9 Z" fill="#666"/><rect x="7" y="13.2" width="16" height="2" fill="#666"/><rect x="7" y="17.6" width="14" height="2" fill="#666"/><rect x="7" y="22" width="12" height="2" fill="#666"/><rect x="7" y="26.4" width="6" height="2" fill="#666"/></svg>
<svg style="position:absolute;left:229px;top:1813px" width="34" height="34" viewBox="0 0 34 34"><circle cx="16.5" cy="17" r="14.6" fill="none" stroke="#666" stroke-width="2.6"/><path d="M12.5 4 Q17 2.5 22 4.5 L20 7.5 L17 8 L16 11 L13.5 11.5 L13 13.5 L10 15.5 L8.5 18.5 Q10 23 14 23 L15.5 27 L16 31 L19.5 30 L22.5 24 L24.5 20 L22 17.5 L18.5 16.5 L17.5 14 L20 12.5 L22.5 14 L24 12 L22 9.5 L24.5 8 L27 9 Q25 5.5 22 4.5" fill="#666"/><path d="M3.5 14 Q4.5 10 6.5 8.2 L7.5 11 L5 14 Z" fill="#666"/></svg>
<svg style="position:absolute;left:277px;top:1815px" width="34" height="32" viewBox="0 0 34 32"><rect x="1.3" y="1.3" width="30.5" height="28.5" rx="2" fill="none" stroke="#666" stroke-width="2.4"/><text x="4" y="17" font-family="Liberation Sans" font-size="16" font-weight="bold" fill="#666">&euro;</text><rect x="17" y="6" width="11" height="2" fill="#666"/><rect x="17" y="10.5" width="11" height="2" fill="#666"/><rect x="17" y="15" width="11" height="2" fill="#666"/><rect x="5" y="20" width="23" height="2" fill="#666"/><rect x="5" y="24.5" width="23" height="2" fill="#666"/></svg>
<svg style="position:absolute;left:327px;top:1813px" width="32" height="34" viewBox="0 0 32 34"><circle cx="5.8" cy="5.2" r="2.8" fill="#666"/><path d="M1.2 19 Q1.2 10.5 5.8 7.5 Q10.4 10.5 10.4 19 Z" fill="#666"/><rect x="1" y="22" width="9.6" height="2" fill="#666"/><rect x="1" y="26" width="9.6" height="2" fill="#666"/><rect x="1" y="30" width="9.6" height="2" fill="#666"/><rect x="14.3" y="1" width="2.2" height="32" fill="#666"/><circle cx="24.8" cy="5.2" r="2.8" fill="#666"/><path d="M20.2 19 Q20.2 10.5 24.8 7.5 Q29.4 10.5 29.4 19 Z" fill="#666"/><rect x="20" y="22" width="9.6" height="2" fill="#666"/><rect x="20" y="26" width="9.6" height="2" fill="#666"/><rect x="20" y="30" width="9.6" height="2" fill="#666"/></svg>
<svg style="position:absolute;left:377px;top:1814px" width="28" height="33" viewBox="0 0 28 33"><rect x="1.2" y="20" width="3.6" height="12" fill="#666"/><rect x="8.6" y="16.2" width="3.6" height="15.8" fill="#666"/><rect x="16" y="12.2" width="3.6" height="19.8" fill="#666"/><path d="M1.5 14 L19.5 4.5" stroke="#555" stroke-width="2.2"/><path d="M14.8 2 L22 1.5 L19.8 8 Z" fill="#555"/></svg>
<div style="position:absolute;left:420px;top:1810px;width:2px;height:41px;background:#b0b0b0;"></div>
<div style="position:absolute;left:439px;top:1819px;width:23px;height:24px;border-radius:5px;background:linear-gradient(#4a94f8,#2c7ef5);"></div>
<svg style="position:absolute;left:439px;top:1819px" width="23" height="24" viewBox="0 0 23 24"><path d="M5 12.5 L9.8 17.5 L17.8 6.5" fill="none" stroke="#fff" stroke-width="2.8"/></svg>
<div class="t" style="left:468.5px;top:1816.5px;font-size:20.5px;line-height:30px;color:#1e1e1e;font-weight:bold;font-style:normal;"><span id="fit146" style="display:inline-block;transform:scaleX(0.9865);transform-origin:left center;">Mostra transazioni pianificate fino al 01/04/25</span></div>
<svg style="position:absolute;left:984px;top:1820px" width="40" height="24" viewBox="0 0 40 24"><rect x="0" y="0" width="26" height="21.3" fill="none" stroke="#7a7a7a" stroke-width="1.6"/><rect x="0" y="0" width="26" height="3" fill="#7a7a7a"/><line x1="8.7" y1="0" x2="8.7" y2="21.3" stroke="#7a7a7a" stroke-width="1.6"/><line x1="17.3" y1="0" x2="17.3" y2="21.3" stroke="#7a7a7a" stroke-width="1.6"/><line x1="0" y1="9.1" x2="26" y2="9.1" stroke="#7a7a7a" stroke-width="1.6"/><line x1="0" y1="15.2" x2="26" y2="15.2" stroke="#7a7a7a" stroke-width="1.6"/><path d="M28.3 14 L38 14 L33.2 21.5 Z" fill="#7a7a7a"/></svg>
<div style="position:absolute;left:1037px;top:1810px;width:2px;height:41px;background:#b0b0b0;"></div>
<div class="t" style="left:1305.6px;top:1817.0px;font-size:20.5px;line-height:30px;color:#1e1e1e;font-weight:bold;font-style:normal;"><span id="fit147" style="display:inline-block;transform:scaleX(0.9695);transform-origin:left center;">1 transazione selezionata</span></div>
<div class="t" style="left:1562.8px;top:1817.0px;font-size:20.5px;line-height:30px;color:#1e1e1e;font-weight:bold;font-style:normal;"><span id="fit148" style="display:inline-block;transform:scaleX(0.9754);transform-origin:left center;">Spese : 1.200,00 &euro;</span></div>
<div class="t" style="left:1750.8px;top:1817.0px;font-size:20.5px;line-height:30px;color:#1e1e1e;font-weight:bold;font-style:normal;"><span id="fit149" style="display:inline-block;transform:scaleX(0.9675);transform-origin:left center;">Entrate : 0,00 &euro;</span></div>
<div class="t" style="left:1908px;top:1817.0px;font-size:20.5px;line-height:30px;color:#1e1e1e;font-weight:bold;font-style:normal;"><span id="fit150" style="display:inline-block;transform:scaleX(0.9845);transform-origin:left center;">Totale : -1.200,00 &euro;</span></div>
<div class="t" style="left:2102.7px;top:1817.0px;font-size:20.5px;line-height:30px;color:#1e1e1e;font-weight:bold;font-style:normal;"><span id="fit151" style="display:inline-block;transform:scaleX(0.9797);transform-origin:left center;">Totale netto : -1.200,00 &euro;</span></div>
<div class="t" style="left:2351.2px;top:1817.0px;font-size:20.5px;line-height:30px;color:#1e1e1e;font-weight:bold;font-style:normal;"><span id="fit152" style="display:inline-block;transform:scaleX(0.9581);transform-origin:left center;">Tasse : 0,00 &euro;</span></div>
</body></html>
